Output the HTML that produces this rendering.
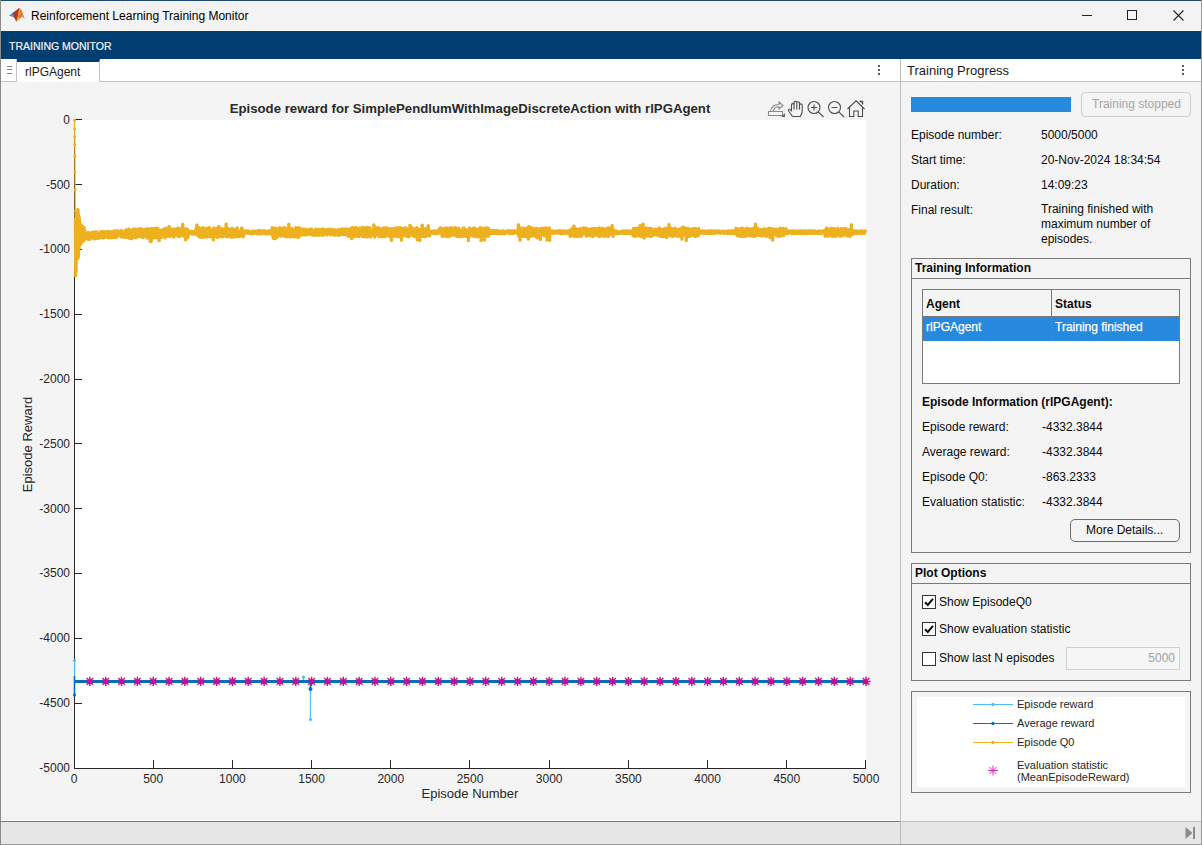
<!DOCTYPE html>
<html><head><meta charset="utf-8">
<style>
*{margin:0;padding:0;box-sizing:border-box}
html,body{width:1202px;height:845px;overflow:hidden;background:#f4f4f4;font-family:"Liberation Sans",sans-serif;color:#000}
.abs{position:absolute}
.t{position:absolute;white-space:nowrap;font-size:12px;line-height:15px;color:#0a0a0a}
.b{font-weight:bold}
#titlebar{left:0;top:0;width:1202px;height:31px;background:#f3f3f3;border-top:1px solid #1c4a73;border-bottom:1px solid #fff}
#toolstrip{left:1px;top:31px;width:1201px;height:28px;background:#003e71}
#tabstrip{left:1px;top:59px;width:899px;height:23px;background:#fff;border-bottom:1px solid #c4c4c4}
#doc{left:1px;top:82px;width:899px;height:739px;background:#f4f4f4}
#vsep{left:900px;top:59px;width:1px;height:762px;background:#bdbdbd}
#rpanel{left:901px;top:82px;width:300px;height:739px;background:#f4f4f4}
#rhead{left:901px;top:59px;width:300px;height:23px;background:#fff;border-bottom:1px solid #c4c4c4}
#status{left:1px;top:821px;width:1201px;height:24px;background:#e6e6e6;border-bottom:1px solid #9a9a9a}
#leftborder{left:0;top:0;width:1px;height:845px;background:#8a8a8a}
#rightborder{left:1201px;top:0;width:1px;height:845px;background:#9a9a9a}
.panel{position:absolute;border:1px solid #7a7a7a;background:#f4f4f4}
.phead{position:absolute;left:0;top:0;right:0;height:20px;border-bottom:1px solid #7a7a7a}
.cb{position:absolute;width:14px;height:14px;border:1px solid #333;background:#fff}
</style></head>
<body>
<div id="titlebar" class="abs"></div>
<svg class="abs" style="left:0;top:0" width="30" height="30" viewBox="0 0 30 30">
 <path d="M9.2,15.6 L14.6,11.6 L17.2,13.2 L14.2,17.6 Z" fill="#3f8fd6"/>
 <path d="M12.5,13.2 L14.6,11.6 L16,12.6 L13.6,14.8 Z" fill="#2a5d9a"/>
 <path d="M14.2,11.9 L19.3,7.8 L18.6,14 L16.4,21.8 L14,17.2 Z" fill="#b8361a"/>
 <path d="M19.3,7.8 L21.3,9.6 L24.8,19.2 L22.3,16.6 L16.4,21.8 L18.6,14 Z" fill="#e47b2a"/>
 <path d="M19.3,7.8 L20.6,9 L19.4,15.5 L18.6,14 Z" fill="#f09a3a"/>
 <path d="M16.4,21.8 L18.2,17.6 L20.2,18.8 Z" fill="#f4c03a"/>
</svg>
<div class="t" style="left:31px;top:9px;font-size:12px;color:#000">Reinforcement Learning Training Monitor</div>
<div class="abs" style="left:1082px;top:15px;width:10px;height:1px;background:#222"></div>
<div class="abs" style="left:1127px;top:10px;width:10px;height:10px;border:1px solid #222"></div>
<svg class="abs" style="left:1173px;top:10px" width="11" height="11" viewBox="0 0 11 11"><path d="M0.5,0.5 L10.5,10.5 M10.5,0.5 L0.5,10.5" stroke="#222" stroke-width="1.1"/></svg>
<div id="toolstrip" class="abs"></div>
<div class="t" style="left:9px;top:39px;font-size:10.5px;color:#f2f2f2;line-height:15px;-webkit-text-stroke:0.2px #f2f2f2">TRAINING MONITOR</div>
<div id="tabstrip" class="abs"></div>
<div class="abs" style="left:1px;top:59px;width:16px;height:23px;background:#fff;border-right:1px solid #c4c4c4;border-bottom:1px solid #c4c4c4"></div>
<div class="abs" style="left:7px;top:66px;width:5px;height:1px;background:#808080;box-shadow:0 3px 0 #808080,0 7px 0 #808080"></div>
<div class="abs" style="left:17px;top:59px;width:83px;height:23px;background:#fff;border-top:3px solid #003e71;border-right:1px solid #c4c4c4"></div>
<div class="t" style="left:25px;top:65px;font-size:12px;color:#1a1a1a">rlPGAgent</div>
<div class="abs" style="left:878px;top:65px;width:2px;height:2px;background:#5a5a5a;box-shadow:0 4px 0 #5a5a5a,0 8px 0 #5a5a5a"></div>
<div id="doc" class="abs"></div>
<div id="rpanel" class="abs"></div>
<div id="rhead" class="abs"></div>
<div class="t" style="left:907px;top:63px;font-size:13px;color:#1a1a1a">Training Progress</div>
<div class="abs" style="left:1182px;top:65px;width:2px;height:2px;background:#5a5a5a;box-shadow:0 4px 0 #5a5a5a,0 8px 0 #5a5a5a"></div>
<div id="vsep" class="abs"></div>
<svg class="abs" style="left:0;top:0" width="900" height="821" viewBox="0 0 900 821">
<rect x="74" y="120" width="792" height="648" fill="#fff"/>
<path d="M74.5,120 L74.5,768.5 L866,768.5" fill="none" stroke="#262626" stroke-width="1"/>
<path d="M74,119.5L82,119.5M74,184.5L82,184.5M74,249.5L82,249.5M74,314.5L82,314.5M74,379.5L82,379.5M74,443.5L82,443.5M74,508.5L82,508.5M74,573.5L82,573.5M74,638.5L82,638.5M74,703.5L82,703.5M74,768.5L82,768.5M74.5,760L74.5,768M153.5,760L153.5,768M232.5,760L232.5,768M311.5,760L311.5,768M390.5,760L390.5,768M469.5,760L469.5,768M549.5,760L549.5,768M628.5,760L628.5,768M707.5,760L707.5,768M786.5,760L786.5,768M865.5,760L865.5,768" stroke="#262626" stroke-width="1" fill="none"/>
<path d="M75.4,218.5 75.6,254.8 75.7,275.5 75.9,262.6 76.1,270.3 76.2,213.3 76.4,257.4 76.5,215.9 76.7,250.9 76.9,222.4 77,247 77.2,213.3 77.3,249.6 77.5,218.5 77.6,244.4 77.8,209.3 78,258.5 78.1,210.6 78.3,257.5 78.4,213.8 78.6,254.6 78.8,221.8 78.9,248.9 79.1,216.6 79.2,248.5 79.4,218.7 79.5,243.8 79.7,222.7 79.9,243.6 80,223.3 80.2,244.4 80.3,226.8 80.5,241.9 80.7,226.2 80.8,244.3 81,224.8 81.1,240.6 81.3,225.3 81.4,240.1 81.6,226.4 81.8,239.7 81.9,228.9 82.1,241.9 82.2,228.5 82.4,239.5 82.6,226.4 82.7,241.3 82.9,228.7 83,241.3 83.2,228.2 83.3,240.2 83.5,229.3 83.7,240.8 83.8,228.1 84,240.7 84.1,227.7 84.3,238.8 84.5,229.2 84.6,238.4 84.8,229.8 84.9,238 85.1,236.5 85.3,235.7 85.5,233 85.7,236.3 85.9,236 86.1,235.4 86.3,238.3 86.5,235.9 86.7,235.1 86.8,233.9 87,238.9 87.2,237.4 87.4,238.9 87.6,233.7 87.8,234.5 88,239.2 88.2,232.4 88.4,232.5 88.6,234.7 88.8,235 89,238.3 89.2,239.3 89.4,235.6 89.6,239 89.8,238 90,237.6 90.2,239.1 90.4,236 90.6,236.1 90.8,233.2 90.9,235.5 91.1,234.6 91.3,235.6 91.5,234.5 91.7,235.9 91.9,237.2 92.1,232 92.3,232 92.5,233.1 92.7,234 92.9,236.9 93.1,237.5 93.3,237 93.5,238.6 93.7,233.6 93.9,236.2 94.1,233 94.3,236.3 94.5,232.1 94.7,232.9 94.9,239 95,237.5 95.2,232.4 95.4,235.6 95.6,231.9 95.8,236.1 96,238.4 96.2,234.4 96.4,233.3 96.6,236.9 96.8,238.2 97,236.5 97.2,231.9 97.4,233.4 97.6,238 97.8,237 98,238.1 98.2,238.3 98.4,233 98.6,237.5 98.8,234.7 99,235.5 99.1,237.3 99.3,233.5 99.5,237.7 99.7,234.1 99.9,237.8 100.1,235.6 100.3,237.1 100.5,236.7 100.7,231.7 100.9,232.8 101.1,236.4 101.3,232.2 101.5,237.1 101.7,235.7 101.9,232.4 102.1,233.9 102.3,237.8 102.5,231.4 102.7,237 102.9,236.6 103.1,232.9 103.2,236.1 103.4,236.3 103.6,237.9 103.8,237.8 104,234.3 104.2,236.7 104.4,234.1 104.6,235.7 104.8,235.1 105,231.5 105.2,234.9 105.4,234.2 105.6,232.1 105.8,237 106,237.2 106.2,231.8 106.4,232.5 106.6,236.5 106.8,236.9 107,233 107.2,231.5 107.3,236.8 107.5,231.5 107.7,231.9 107.9,233.9 108.1,235.2 108.3,237.4 108.5,237.9 108.7,231.3 108.9,236.4 109.1,233.1 109.3,236.3 109.5,232.3 109.7,233.9 109.9,236 110.1,236.8 110.3,233 110.5,237.6 110.7,236.4 110.9,234.1 111.1,232 111.3,233.7 111.5,236 111.6,231.5 111.8,236.5 112,237.9 112.2,236.1 112.4,234.8 112.6,237.5 112.8,236.7 113,235.3 113.2,233.9 113.4,237 113.6,235.3 113.8,231.6 114,230.9 114.2,233.2 114.4,233 114.6,233.7 114.8,236.9 115,237.6 115.2,237.7 115.4,231.4 115.6,232.9 115.7,231 115.9,237.6 116.1,233.3 116.3,234.4 116.5,232.6 116.7,235.5 116.9,230.7 117.1,237.2 117.3,233.9 117.5,232.5 117.7,231.4 117.9,232.5 118.1,232.7 118.3,232.1 118.5,231.2 118.7,235.2 118.9,232.8 119.1,231.3 119.3,231.5 119.5,234.7 119.7,232.1 119.8,231.5 120,233.6 120.2,233.2 120.4,234.9 120.6,233.5 120.8,233.3 121,237 121.2,233.1 121.4,230.6 121.6,231.4 121.8,232.4 122,234.8 122.2,232.4 122.4,233.4 122.6,234.4 122.8,231.6 123,236.9 123.2,232.2 123.4,237.3 123.6,233.3 123.8,234.1 123.9,235.8 124.1,232.6 124.3,234 124.5,233.1 124.7,231 124.9,235.6 125.1,237.3 125.3,235.3 125.5,232.6 125.7,236 125.9,236.2 126.1,229.8 126.3,234.5 126.5,235.6 126.7,236.9 126.9,230.7 127.1,230 127.3,233 127.5,237.5 127.7,230.4 127.9,231.7 128,236.1 128.2,234.3 128.4,236.7 128.6,232.5 128.8,235.7 129,228.9 129.2,238.1 129.4,230 129.6,231.6 129.8,235.7 130,238.6 130.2,234.2 130.4,230.4 130.6,237.4 130.8,232.4 131,232.4 131.2,230.6 131.4,231.8 131.6,233.9 131.8,238.6 132,231.5 132.1,236 132.3,231.7 132.5,232.5 132.7,234.7 132.9,229.6 133.1,229.3 133.3,237.4 133.5,232.4 133.7,234.9 133.9,229.8 134.1,229.1 134.3,232.1 134.5,231.4 134.7,232.2 134.9,236.5 135.1,228.8 135.3,233.2 135.5,235.4 135.7,230 135.9,237.8 136.1,233.1 136.3,233.7 136.4,230.4 136.6,230.5 136.8,235.2 137,237.2 137.2,233.4 137.4,230.1 137.6,229 137.8,229 138,236.3 138.2,235.6 138.4,232.1 138.6,230 138.8,235.4 139,230 139.2,236.4 139.4,228.8 139.6,232.7 139.8,233.1 140,232.4 140.2,228.7 140.4,234.4 140.5,232.8 140.7,231.5 140.9,233 141.1,228.9 141.3,235.7 141.5,237.2 141.7,230.3 141.9,233.6 142.1,236.5 142.3,229.1 142.5,230.6 142.7,236.5 142.9,231.5 143.1,234.8 143.3,237.3 143.5,237.1 143.7,235.9 143.9,233.1 144.1,234.6 144.3,233.1 144.5,236.3 144.6,232 144.8,229.8 145,229.8 145.2,230.9 145.4,229.3 145.6,235.2 145.8,236.1 146,229.4 146.2,235.9 146.4,235.7 146.6,230 146.8,230.4 147,234.3 147.2,238.1 147.4,231.5 147.6,228.6 147.8,233.2 148,233.2 148.2,236.4 148.4,237.2 148.6,232.7 148.7,232.6 148.9,236.4 149.1,229.9 149.3,229 149.5,237.6 149.7,233.6 149.9,234.9 150.1,233.1 150.3,241.6 150.5,236.4 150.7,230.8 150.9,236.2 151.1,241.4 151.3,231.2 151.5,231.9 151.7,232.2 151.9,228.4 152.1,235.6 152.3,230.8 152.5,230.1 152.7,229.2 152.8,231.2 153,230.5 153.2,231 153.4,234.7 153.6,238 153.8,231.8 154,235.8 154.2,231.5 154.4,231.6 154.6,232.8 154.8,228.2 155,231.1 155.2,228.4 155.4,232 155.6,235.5 155.8,237.6 156,234.3 156.2,235.6 156.4,232.6 156.6,228.5 156.8,228.2 156.9,230 157.1,232.1 157.3,237.6 157.5,236.4 157.7,236.3 157.9,232 158.1,228.7 158.3,232.8 158.5,234.4 158.7,231.5 158.9,235.2 159.1,240.6 159.3,231.7 159.5,231.2 159.7,234.9 159.9,232.2 160.1,234.8 160.3,235.8 160.5,235.5 160.7,237.5 160.9,230 161.1,236.5 161.2,235.5 161.4,237.4 161.6,236.8 161.8,234.4 162,234.3 162.2,233.8 162.4,231.6 162.6,234.3 162.8,229.9 163,235.1 163.2,233.2 163.4,234.9 163.6,229.6 163.8,231.9 164,231 164.2,235.1 164.4,228.5 164.6,231.5 164.8,231.2 165,237.8 165.2,237.6 165.3,235.7 165.5,230.4 165.7,236.3 165.9,228.2 166.1,234.4 166.3,233 166.5,229.3 166.7,233.4 166.9,229.6 167.1,233.5 167.3,234 167.5,236.3 167.7,232 167.9,230.4 168.1,236 168.3,232.1 168.5,234.6 168.7,233.6 168.9,229.8 169.1,226.6 169.3,231.3 169.4,234.8 169.6,231 169.8,236.4 170,230.7 170.2,236.6 170.4,232.2 170.6,228.6 170.8,233.5 171,234.8 171.2,233.8 171.4,229 171.6,234.2 171.8,234.2 172,234 172.2,232.2 172.4,232.5 172.6,232.2 172.8,230.3 173,235 173.2,232.7 173.4,232.2 173.5,231.4 173.7,237.1 173.9,230 174.1,236.9 174.3,228.9 174.5,231.5 174.7,230.4 174.9,235.3 175.1,230.2 175.3,230.2 175.5,234.4 175.7,231.1 175.9,232.4 176.1,230.8 176.3,233.7 176.5,231.2 176.7,229.8 176.9,229 177.1,231.4 177.3,230.7 177.5,233.6 177.6,236.2 177.8,228 178,236 178.2,233.5 178.4,228.2 178.6,234.6 178.8,231.3 179,235.9 179.2,233.2 179.4,228.8 179.6,236.6 179.8,235.5 180,230.6 180.2,235.5 180.4,234.9 180.6,230.2 180.8,232.3 181,233 181.2,229 181.4,234.3 181.6,228.3 181.8,235.5 181.9,228.4 182.1,233.9 182.3,232.6 182.5,227.9 182.7,224.3 182.9,233.2 183.1,233.5 183.3,233.5 183.5,236.2 183.7,229.7 183.9,230.4 184.1,232.6 184.3,232 184.5,235.6 184.7,236.1 184.9,234.2 185.1,232.4 185.3,230.8 185.5,230.3 185.7,239.7 185.9,228.6 186,229.5 186.2,232.3 186.4,236 186.6,234.5 186.8,236.8 187,233 187.2,234.1 187.4,236.5 187.6,233.1 187.8,229.5 188,237.4 188.2,232 188.4,233.6 188.6,232.5 188.8,232.8 189,234.3 189.2,231 189.4,231.7 189.6,233.7 189.8,232.3 190,233.4 190.1,233.1 190.3,232.5 190.5,233.3 190.7,233.2 190.9,233 191.1,232.1 191.3,233.5 191.5,233.7 191.7,231.9 191.9,233.2 192.1,231.1 192.3,232.4 192.5,231.9 192.7,233.2 192.9,231.5 193.1,234 193.3,233.8 193.5,234 193.7,232 193.9,231.9 194.1,233.7 194.2,233 194.4,231.5 194.6,232.3 194.8,234 195,233.5 195.2,233.8 195.4,233.9 195.6,232.9 195.8,234.1 196,228.5 196.2,232.5 196.4,230 196.6,233.7 196.8,225 197,234.4 197.2,235.1 197.4,232.3 197.6,235.6 197.8,233.2 198,235.5 198.2,234.6 198.3,230.5 198.5,232.2 198.7,235.2 198.9,232.5 199.1,235.5 199.3,227.7 199.5,228.3 199.7,237.2 199.9,229.9 200.1,232.8 200.3,234.2 200.5,228.9 200.7,228.8 200.9,230.3 201.1,231.9 201.3,236.8 201.5,235.8 201.7,228.7 201.9,236 202.1,237.4 202.3,233.9 202.4,233.9 202.6,231.6 202.8,233 203,229.8 203.2,227.7 203.4,230.1 203.6,228.6 203.8,231.2 204,235.9 204.2,237.1 204.4,236.3 204.6,234.1 204.8,235 205,236.9 205.2,230.4 205.4,233.5 205.6,236.4 205.8,228.7 206,231.9 206.2,234.7 206.4,232.9 206.6,230.7 206.7,236.3 206.9,228.2 207.1,232.3 207.3,237.2 207.5,234.5 207.7,233.2 207.9,234.3 208.1,228.8 208.3,235 208.5,235 208.7,227.9 208.9,236.4 209.1,232.1 209.3,228.2 209.5,227.6 209.7,228.9 209.9,232.1 210.1,235.8 210.3,233.3 210.5,236.7 210.7,236.1 210.8,231.8 211,234.5 211.2,237.2 211.4,233.1 211.6,232.2 211.8,230.6 212,234.4 212.2,234.3 212.4,236 212.6,229.8 212.8,235.4 213,230.6 213.2,234.3 213.4,239.8 213.6,235.1 213.8,227.8 214,234.4 214.2,228 214.4,233.3 214.6,234.1 214.8,229.8 214.9,235.7 215.1,236.2 215.3,234.7 215.5,232.5 215.7,234.7 215.9,232.2 216.1,232.3 216.3,228.6 216.5,235.2 216.7,230.8 216.9,236.6 217.1,236.6 217.3,237.3 217.5,232.1 217.7,231.8 217.9,227.7 218.1,235.6 218.3,237.1 218.5,235.9 218.7,231.3 218.9,226.6 219,236.7 219.2,228.5 219.4,232.6 219.6,234.5 219.8,231.1 220,230.1 220.2,231.5 220.4,236.2 220.6,230.8 220.8,234.8 221,230.3 221.2,232 221.4,231.4 221.6,235.4 221.8,236.8 222,228.7 222.2,231.4 222.4,229.5 222.6,230.3 222.8,237 223,235.6 223.1,231.7 223.3,231.2 223.5,233.2 223.7,229.3 223.9,229.7 224.1,232.5 224.3,232.3 224.5,234.9 224.7,230.9 224.9,232.9 225.1,232.8 225.3,230.4 225.5,236.1 225.7,231.5 225.9,230 226.1,224 226.3,235.9 226.5,234.4 226.7,236.6 226.9,227.6 227.1,230.1 227.2,234.8 227.4,235 227.6,228.2 227.8,234 228,231.3 228.2,233.4 228.4,236.7 228.6,230.5 228.8,231.5 229,232.8 229.2,229.1 229.4,229.7 229.6,233.9 229.8,231.9 230,235.3 230.2,232.7 230.4,232.9 230.6,230.7 230.8,235.3 231,236.6 231.2,233.8 231.4,237.1 231.5,234.7 231.7,228.3 231.9,234.7 232.1,235.8 232.3,233.8 232.5,230.2 232.7,237.1 232.9,233.5 233.1,228.7 233.3,229.8 233.5,236.8 233.7,235 233.9,235.8 234.1,237 234.3,233.1 234.5,236 234.7,234.7 234.9,230.8 235.1,235.3 235.3,230.3 235.5,233.5 235.6,235.1 235.8,233.9 236,236.9 236.2,231.1 236.4,229.4 236.6,234.4 236.8,228.3 237,230.5 237.2,227.9 237.4,235 237.6,236.4 237.8,233.4 238,233.5 238.2,232.4 238.4,235.7 238.6,232.6 238.8,230.8 239,236.4 239.2,233.1 239.4,231.6 239.6,231.9 239.7,237 239.9,233.7 240.1,233.3 240.3,232.4 240.5,232.7 240.7,234.8 240.9,233.9 241.1,231.7 241.3,230.7 241.5,232.7 241.7,227.9 241.9,231.6 242.1,229.7 242.3,231.2 242.5,233.2 242.7,229.2 242.9,233.5 243.1,236.9 243.3,232.3 243.5,233.7 243.7,235.8 243.8,235 244,233.3 244.2,234.1 244.4,232.2 244.6,232.7 244.8,233.2 245,232.4 245.2,231.9 245.4,232.2 245.6,231.9 245.8,232.2 246,231.2 246.2,230.8 246.4,232.9 246.6,232.9 246.8,231.1 247,233 247.2,231.6 247.4,231.7 247.6,231.7 247.8,230.8 247.9,231.3 248.1,233.5 248.3,231.9 248.5,232.4 248.7,232.1 248.9,232.8 249.1,233.1 249.3,231.5 249.5,232.2 249.7,233.2 249.9,233.2 250.1,232.9 250.3,233.4 250.5,232.3 250.7,233.6 250.9,233.8 251.1,233.8 251.3,233.7 251.5,231.7 251.7,233.7 251.9,232.5 252,231.4 252.2,232.4 252.4,233.5 252.6,231.1 252.8,231.1 253,233.9 253.2,233.2 253.4,232.3 253.6,231.3 253.8,232.7 254,231.6 254.2,233.2 254.4,231.6 254.6,232.9 254.8,232.9 255,231.5 255.2,231.2 255.4,231.2 255.6,232.1 255.8,232.6 256,231.6 256.2,231.9 256.3,231.2 256.5,231.3 256.7,233.6 256.9,232.8 257.1,231.8 257.3,233.2 257.5,233.4 257.7,234 257.9,232 258.1,230.8 258.3,230.7 258.5,233.6 258.7,231.7 258.9,232.6 259.1,231.9 259.3,232.7 259.5,230.9 259.7,230.7 259.9,233.9 260.1,231.6 260.3,233.6 260.4,233.9 260.6,233.1 260.8,231.6 261,230.7 261.2,233.6 261.4,232.9 261.6,233.9 261.8,232.2 262,232.4 262.2,232.8 262.4,233 262.6,231.3 262.8,231.2 263,233.1 263.2,232.7 263.4,231.9 263.6,231.4 263.8,230.7 264,232.7 264.2,231.7 264.4,232.2 264.5,231.3 264.7,233.5 264.9,233.4 265.1,233.6 265.3,230.9 265.5,233.2 265.7,232.4 265.9,233.6 266.1,232.9 266.3,233.9 266.5,232.1 266.7,233.5 266.9,231.9 267.1,233.1 267.3,233.2 267.5,232.4 267.7,232.8 267.9,233.1 268.1,233.8 268.3,233.8 268.5,231 268.6,233 268.8,233.7 269,233.4 269.2,232.4 269.4,230.6 269.6,233.3 269.8,231.1 270,232.4 270.2,232.6 270.4,231.3 270.6,232.7 270.8,233.8 271,232.1 271.2,231.8 271.4,231.9 271.6,233.1 271.8,230.8 272,231.1 272.2,227.5 272.4,229 272.6,235.5 272.7,235.5 272.9,236.5 273.1,229.8 273.3,238.2 273.5,233.6 273.7,234.6 273.9,228.2 274.1,234.2 274.3,230.7 274.5,229.7 274.7,232.5 274.9,233.2 275.1,238.7 275.3,233.4 275.5,230.8 275.7,233.6 275.9,233.7 276.1,228.3 276.3,236.3 276.5,229.9 276.7,229.9 276.8,230.5 277,236.2 277.2,233.8 277.4,237.1 277.6,233.2 277.8,231.9 278,235.2 278.2,234.1 278.4,236.1 278.6,233 278.8,235 279,230.3 279.2,234.5 279.4,227.9 279.6,235.4 279.8,227.5 280,231 280.2,230.9 280.4,231.2 280.6,228.8 280.8,232.2 281,236.1 281.1,230.4 281.3,230.7 281.5,233.4 281.7,231.3 281.9,232.1 282.1,231.1 282.3,231.4 282.5,228.1 282.7,232.6 282.9,230 283.1,230 283.3,233.3 283.5,235.9 283.7,232.4 283.9,229 284.1,228 284.3,229.4 284.5,227.5 284.7,228.7 284.9,234.7 285.1,232.7 285.2,228.7 285.4,234.4 285.6,236.5 285.8,229.5 286,234.8 286.2,228.8 286.4,231.8 286.6,229.4 286.8,233.6 287,236.8 287.2,228.7 287.4,236 287.6,233.4 287.8,231.1 288,236.5 288.2,235.2 288.4,228.6 288.6,235.2 288.8,224.4 289,228.9 289.2,230.7 289.3,235.1 289.5,235.5 289.7,236.8 289.9,234.6 290.1,231.1 290.3,237.1 290.5,235.2 290.7,228.7 290.9,235.2 291.1,234.6 291.3,231.2 291.5,235.9 291.7,236.2 291.9,233.1 292.1,236 292.3,228.6 292.5,236.4 292.7,235 292.9,235.2 293.1,235 293.3,233.6 293.4,231.5 293.6,234.6 293.8,237 294,237 294.2,231.4 294.4,233.4 294.6,236.2 294.8,229.7 295,230.7 295.2,235.1 295.4,237 295.6,231.4 295.8,227.5 296,228.6 296.2,235.6 296.4,235.5 296.6,232.5 296.8,236.6 297,237 297.2,232.9 297.4,231.9 297.5,236.6 297.7,230.8 297.9,228.1 298.1,231.5 298.3,229 298.5,236.2 298.7,237.1 298.9,230.4 299.1,228.3 299.3,227.7 299.5,228.5 299.7,235.6 299.9,233.6 300.1,229.7 300.3,234.9 300.5,232.9 300.7,231.9 300.9,229.1 301.1,230.4 301.3,235 301.5,228.9 301.6,231.8 301.8,235.2 302,234 302.2,231.2 302.4,232.2 302.6,233.6 302.8,233.3 303,234 303.2,231.7 303.4,232.5 303.6,229 303.8,231.7 304,234.5 304.2,234.9 304.4,234.7 304.6,229.6 304.8,230.2 305,232.2 305.2,234.7 305.4,231.8 305.6,234.5 305.8,231.5 305.9,229.1 306.1,230.8 306.3,234.8 306.5,230.1 306.7,234.1 306.9,230.3 307.1,234.9 307.3,230.7 307.5,233.1 307.7,233.7 307.9,231.5 308.1,232.9 308.3,232.3 308.5,229.5 308.7,232 308.9,230.5 309.1,230.4 309.3,233 309.5,233.6 309.7,234.2 309.9,232 310,231.2 310.2,232.8 310.4,229.6 310.6,234.3 310.8,228.9 311,231.9 311.2,234.7 311.4,229 311.6,229.4 311.8,235 312,231.4 312.2,233.8 312.4,231.6 312.6,234.2 312.8,235.1 313,230.3 313.2,233 313.4,231.3 313.6,233.4 313.8,234.8 314,233.5 314.1,232.1 314.3,234.5 314.5,233.1 314.7,233.5 314.9,230.1 315.1,231.1 315.3,230.8 315.5,235.4 315.7,233.2 315.9,229.2 316.1,232.1 316.3,232.1 316.5,230.7 316.7,233.1 316.9,231.6 317.1,234.9 317.3,231 317.5,233.2 317.7,234 317.9,229.1 318.1,231 318.2,230 318.4,234.2 318.6,230.5 318.8,235.3 319,234.4 319.2,234.8 319.4,230.5 319.6,233.3 319.8,229.9 320,234.2 320.2,231.7 320.4,230.2 320.6,229.3 320.8,231.3 321,233.1 321.2,235 321.4,231.8 321.6,235 321.8,233 322,234.1 322.2,233.9 322.3,235.4 322.5,234.6 322.7,234.6 322.9,233.7 323.1,233.7 323.3,228.9 323.5,232.3 323.7,233 323.9,235.1 324.1,234.7 324.3,233.3 324.5,230.8 324.7,231.5 324.9,231 325.1,234.2 325.3,231.9 325.5,230.1 325.7,232.4 325.9,233.4 326.1,231.4 326.3,229.5 326.5,230.1 326.6,234.5 326.8,235.1 327,231 327.2,234.7 327.4,230.5 327.6,231.1 327.8,230.2 328,232.6 328.2,229.6 328.4,230.7 328.6,230 328.8,229.2 329,233.2 329.2,230 329.4,230.8 329.6,230.9 329.8,232.9 330,231 330.2,231.2 330.4,234.9 330.6,229.8 330.7,235 330.9,233.4 331.1,234.7 331.3,229.2 331.5,234.6 331.7,233.8 331.9,232.9 332.1,229.6 332.3,229.4 332.5,234.3 332.7,230.9 332.9,232.3 333.1,232.7 333.3,230.2 333.5,232.2 333.7,232.4 333.9,231.9 334.1,229.9 334.3,230.4 334.5,233.4 334.7,235.5 334.8,230.1 335,231.2 335.2,233.1 335.4,230.2 335.6,231 335.8,232.6 336,231.7 336.2,232.5 336.4,230.4 336.6,234.6 336.8,230.9 337,233 337.2,235 337.4,232.3 337.6,231.4 337.8,233.3 338,232.9 338.2,235.3 338.4,229.4 338.6,230.2 338.8,233.9 338.9,234 339.1,234.2 339.3,229.5 339.5,235.2 339.7,234.4 339.9,232.8 340.1,232 340.3,233 340.5,234.8 340.7,234.4 340.9,231.4 341.1,231 341.3,232.2 341.5,234.6 341.7,228.9 341.9,233.2 342.1,234.5 342.3,232.3 342.5,232.3 342.7,232.6 342.9,229.1 343,233.2 343.2,233.6 343.4,234 343.6,234.6 343.8,229 344,229.8 344.2,230.6 344.4,233.3 344.6,234.5 344.8,234.3 345,234.5 345.2,228.9 345.4,233.1 345.6,233.4 345.8,234.9 346,230.3 346.2,230.2 346.4,231.5 346.6,230 346.8,229 347,234.9 347.1,233.2 347.3,234.5 347.5,229.6 347.7,231.1 347.9,233.7 348.1,231.7 348.3,236.4 348.5,229.4 348.7,235.6 348.9,229.1 349.1,235.9 349.3,229.3 349.5,229.8 349.7,231.4 349.9,234.1 350.1,229.5 350.3,231.8 350.5,230.4 350.7,235 350.9,234.5 351.1,228.5 351.3,231.8 351.4,228.1 351.6,238.5 351.8,233.5 352,235.8 352.2,230.6 352.4,233.1 352.6,228.3 352.8,227.6 353,231.8 353.2,230.5 353.4,230.3 353.6,228.1 353.8,236.1 354,235.2 354.2,236.8 354.4,228.4 354.6,228.3 354.8,235 355,235.7 355.2,228.6 355.4,233 355.5,231.2 355.7,227.4 355.9,228.4 356.1,235.5 356.3,235.6 356.5,236.1 356.7,234.2 356.9,233.1 357.1,235.3 357.3,228.9 357.5,230.6 357.7,233.5 357.9,235 358.1,234.9 358.3,235 358.5,228.4 358.7,236.7 358.9,230.1 359.1,233.7 359.3,228 359.5,235.2 359.6,232.7 359.8,228.2 360,230.5 360.2,231.3 360.4,231.5 360.6,234.1 360.8,232.2 361,235.1 361.2,234.7 361.4,230.4 361.6,232.8 361.8,231.7 362,230.6 362.2,236.4 362.4,227.4 362.6,230.6 362.8,227.4 363,228.3 363.2,227.9 363.4,227.6 363.6,236.6 363.7,227.8 363.9,235.6 364.1,235.6 364.3,234.9 364.5,235.8 364.7,229.3 364.9,236.7 365.1,230.3 365.3,228.8 365.5,230.6 365.7,230 365.9,235.7 366.1,227.5 366.3,230.5 366.5,234 366.7,234.4 366.9,229.2 367.1,229.3 367.3,236.2 367.5,237 367.7,227.6 367.8,230.5 368,227.7 368.2,236.1 368.4,228.4 368.6,233.7 368.8,232.4 369,235.7 369.2,230.5 369.4,231.4 369.6,234.4 369.8,233.2 370,227.8 370.2,233 370.4,231.2 370.6,236.9 370.8,235.5 371,233.8 371.2,231.6 371.4,234.7 371.6,235.5 371.8,231.5 371.9,232.9 372.1,234.6 372.3,232.3 372.5,231.1 372.7,230.7 372.9,231.6 373.1,229.7 373.3,234.1 373.5,233.2 373.7,233.8 373.9,224.9 374.1,232.3 374.3,232.1 374.5,237.1 374.7,234.5 374.9,231 375.1,236.2 375.3,232.4 375.5,227.7 375.7,232.8 375.9,229.3 376.1,229 376.2,234.6 376.4,232.2 376.6,231.7 376.8,232.3 377,234.3 377.2,232.2 377.4,235.2 377.6,229 377.8,227.6 378,230.4 378.2,230.2 378.4,229.3 378.6,229.2 378.8,234.7 379,236.9 379.2,233.8 379.4,231.2 379.6,228.1 379.8,236.5 380,236 380.2,228.6 380.3,235.3 380.5,229.7 380.7,231.1 380.9,230 381.1,228.7 381.3,229.5 381.5,231.6 381.7,230.9 381.9,233.4 382.1,236.9 382.3,229.4 382.5,230.8 382.7,230.4 382.9,234 383.1,235.3 383.3,230.4 383.5,233.9 383.7,228.3 383.9,227.9 384.1,227.8 384.3,233.9 384.4,232 384.6,236.7 384.8,231.9 385,229.9 385.2,235.1 385.4,234.7 385.6,236.4 385.8,233.6 386,227.9 386.2,233.1 386.4,234.8 386.6,227.8 386.8,232.9 387,229.7 387.2,230.9 387.4,228.4 387.6,231.8 387.8,232 388,229.7 388.2,235.6 388.4,234.4 388.5,230.1 388.7,229.7 388.9,230.3 389.1,232.9 389.3,232.5 389.5,228.5 389.7,236.4 389.9,230.4 390.1,235.8 390.3,231.5 390.5,233.2 390.7,230.5 390.9,236.6 391.1,235.8 391.3,240.2 391.5,230 391.7,235.1 391.9,229.9 392.1,228.6 392.3,230.9 392.5,236.8 392.6,230.1 392.8,229.9 393,235.2 393.2,236.2 393.4,235.1 393.6,235.1 393.8,235 394,228.7 394.2,236.2 394.4,231 394.6,230.7 394.8,232.2 395,228.1 395.2,236.3 395.4,234.9 395.6,231.3 395.8,232.7 396,234.2 396.2,236.2 396.4,230.1 396.6,233.3 396.7,233.7 396.9,236.2 397.1,228.7 397.3,227.9 397.5,232.9 397.7,236.6 397.9,230.8 398.1,227.6 398.3,233.8 398.5,232.4 398.7,230.5 398.9,235.5 399.1,229.8 399.3,229.3 399.5,236.8 399.7,233.7 399.9,233.9 400.1,229.4 400.3,232.4 400.5,227.7 400.7,236.1 400.9,232.6 401,232.8 401.2,234.3 401.4,240 401.6,229.1 401.8,234.4 402,231.9 402.2,233.4 402.4,235.6 402.6,228.7 402.8,234.6 403,235.9 403.2,229.4 403.4,234.5 403.6,230.4 403.8,229.2 404,235 404.2,230.3 404.4,228.6 404.6,232.5 404.8,232.8 405,231.6 405.1,227.6 405.3,234.9 405.5,235.6 405.7,233.8 405.9,232.9 406.1,228.3 406.3,235.4 406.5,230.3 406.7,228.6 406.9,234.9 407.1,234.8 407.3,236.6 407.5,236.4 407.7,231.8 407.9,236.1 408.1,233.6 408.3,231.3 408.5,236.4 408.7,236.8 408.9,235.3 409.1,230.6 409.2,233.9 409.4,234.3 409.6,233.6 409.8,234.6 410,225.4 410.2,235.4 410.4,235.5 410.6,230.5 410.8,231.8 411,228.7 411.2,232.8 411.4,234.7 411.6,233.6 411.8,232.8 412,227.5 412.2,228.9 412.4,234.2 412.6,230.8 412.8,232.7 413,233.5 413.2,231.7 413.3,233.5 413.5,236.2 413.7,234.9 413.9,230.8 414.1,235.2 414.3,231.9 414.5,232.9 414.7,236.6 414.9,233.6 415.1,231.9 415.3,228.7 415.5,230.2 415.7,232.7 415.9,228.5 416.1,231.8 416.3,230.2 416.5,229.9 416.7,232.2 416.9,230.8 417.1,227.6 417.3,239.7 417.4,234.7 417.6,235.3 417.8,232 418,235.3 418.2,229.4 418.4,235.4 418.6,230.1 418.8,229.5 419,229.9 419.2,230.9 419.4,229.3 419.6,229.9 419.8,240.5 420,234.1 420.2,230.7 420.4,230.8 420.6,230.8 420.8,231.4 421,235.1 421.2,234.6 421.4,233.4 421.5,230.7 421.7,231 421.9,230.4 422.1,225.2 422.3,233.3 422.5,236.5 422.7,227.6 422.9,233.9 423.1,231.4 423.3,235.3 423.5,232.2 423.7,231.6 423.9,235.2 424.1,236.3 424.3,236.7 424.5,232.5 424.7,231.1 424.9,229.8 425.1,236.5 425.3,235.6 425.5,236.6 425.7,228.7 425.8,236.2 426,228.9 426.2,228.3 426.4,235.9 426.6,235.2 426.8,235.1 427,235.4 427.2,231.9 427.4,235.6 427.6,232.2 427.8,232.5 428,231.1 428.2,225.8 428.4,234.3 428.6,235.5 428.8,228.6 429,236 429.2,234.5 429.4,234.7 429.6,236 429.8,230.9 429.9,231 430.1,232.8 430.3,233 430.5,232 430.7,233.5 430.9,232.5 431.1,231.6 431.3,231.9 431.5,231.7 431.7,232 431.9,231 432.1,231 432.3,233 432.5,233.1 432.7,232.3 432.9,233 433.1,232 433.3,233 433.5,232.2 433.7,233.6 433.9,231.3 434,231.7 434.2,232.5 434.4,232 434.6,233.2 434.8,230.7 435,232.6 435.2,233 435.4,231.7 435.6,231.1 435.8,233.8 436,233.3 436.2,232.2 436.4,231.9 436.6,232.1 436.8,233 437,232.6 437.2,231.9 437.4,231.5 437.6,233.5 437.8,231.6 438,231.8 438.1,230.9 438.3,232.2 438.5,232.9 438.7,229.4 438.9,232.6 439.1,230.6 439.3,231.7 439.5,230.1 439.7,231.9 439.9,228.3 440.1,227.9 440.3,231.3 440.5,233 440.7,231.8 440.9,230.6 441.1,230.9 441.3,228.1 441.5,230.6 441.7,234.5 441.9,229.1 442.1,236.4 442.2,232.5 442.4,231.4 442.6,235.4 442.8,236.1 443,228.8 443.2,233.4 443.4,233.4 443.6,230.9 443.8,236.4 444,233.9 444.2,234.3 444.4,235 444.6,228.9 444.8,228.4 445,234.4 445.2,233.6 445.4,236 445.6,230.1 445.8,231.2 446,234.3 446.2,230.5 446.4,230.5 446.5,236.2 446.7,230.3 446.9,227.9 447.1,232.8 447.3,236 447.5,235.6 447.7,234 447.9,228.4 448.1,236.9 448.3,235.6 448.5,235.9 448.7,230 448.9,235.5 449.1,235.2 449.3,234.3 449.5,230.3 449.7,236.2 449.9,227.8 450.1,233.2 450.3,229.8 450.5,228.4 450.6,232.3 450.8,233 451,227.9 451.2,235.5 451.4,235.2 451.6,233 451.8,227.8 452,234.7 452.2,232.1 452.4,234.3 452.6,232.1 452.8,231.3 453,234.7 453.2,228.8 453.4,234.8 453.6,232.1 453.8,234.6 454,229 454.2,235.1 454.4,234.8 454.6,234.6 454.7,232.2 454.9,227.7 455.1,229.5 455.3,232.9 455.5,227.7 455.7,229.6 455.9,234.6 456.1,231.7 456.3,230.5 456.5,234.2 456.7,236.5 456.9,231.6 457.1,235.3 457.3,231.4 457.5,230.4 457.7,231.9 457.9,231.9 458.1,232.3 458.3,236.3 458.5,228.1 458.7,228.2 458.8,234.1 459,235 459.2,229.6 459.4,236.8 459.6,236.1 459.8,231.7 460,232.5 460.2,233.9 460.4,232.8 460.6,235.7 460.8,229.8 461,235.8 461.2,231 461.4,230.8 461.6,235.2 461.8,234.1 462,234.1 462.2,236.2 462.4,236.6 462.6,234 462.8,232.1 462.9,229.4 463.1,228.5 463.3,229.2 463.5,232.8 463.7,229.9 463.9,227.9 464.1,235.8 464.3,235.3 464.5,231 464.7,235.9 464.9,233 465.1,233.4 465.3,234.9 465.5,230.9 465.7,229.8 465.9,233.8 466.1,232.9 466.3,236.4 466.5,231.8 466.7,231.6 466.9,232.3 467,234.9 467.2,231.1 467.4,230.7 467.6,230.3 467.8,232.3 468,230.9 468.2,232.9 468.4,240.5 468.6,236.1 468.8,229 469,233.7 469.2,236.6 469.4,229.5 469.6,228 469.8,227.8 470,235.5 470.2,231.7 470.4,231.8 470.6,230.7 470.8,233.6 471,234.8 471.2,229.6 471.3,230.5 471.5,233.8 471.7,233.7 471.9,229.8 472.1,229.3 472.3,235 472.5,232.5 472.7,229.1 472.9,232.3 473.1,236 473.3,228.2 473.5,234.1 473.7,231.9 473.9,229 474.1,228.2 474.3,232.6 474.5,236.2 474.7,233.9 474.9,233 475.1,236.6 475.3,228.4 475.4,233.2 475.6,228.9 475.8,233.1 476,231.3 476.2,232.2 476.4,234 476.6,234.2 476.8,231.9 477,232.6 477.2,231.5 477.4,236 477.6,236.8 477.8,235.4 478,229.4 478.2,230.1 478.4,236.8 478.6,235.4 478.8,233.1 479,230.8 479.2,233.3 479.4,233.3 479.5,230.4 479.7,235.6 479.9,228 480.1,229.1 480.3,227.7 480.5,229.1 480.7,231.9 480.9,228.6 481.1,240.4 481.3,234.4 481.5,229.8 481.7,231 481.9,232.9 482.1,228.6 482.3,230.4 482.5,228 482.7,232.6 482.9,231.4 483.1,236.2 483.3,234.6 483.5,231.5 483.6,232.6 483.8,235.7 484,232.2 484.2,233.3 484.4,232 484.6,239.9 484.8,235 485,232.4 485.2,230.8 485.4,230.8 485.6,228.2 485.8,228 486,230.8 486.2,235.8 486.4,228.8 486.6,232.7 486.8,228.5 487,235.7 487.2,228.4 487.4,228 487.6,230.4 487.7,235.6 487.9,228.1 488.1,230 488.3,236.5 488.5,233.1 488.7,233.8 488.9,228.7 489.1,231.5 489.3,233.6 489.5,232.6 489.7,232.2 489.9,231.4 490.1,233.7 490.3,232 490.5,231.6 490.7,231.1 490.9,233.2 491.1,232.8 491.3,232.4 491.5,233.6 491.7,230.7 491.8,231.4 492,232.6 492.2,231.5 492.4,232.5 492.6,230.8 492.8,233.3 493,232.4 493.2,231.2 493.4,231.5 493.6,233.3 493.8,230.7 494,230.9 494.2,231.2 494.4,233.4 494.6,230.7 494.8,231.2 495,231.9 495.2,233.4 495.4,231.3 495.6,231.7 495.8,231.6 496,233.3 496.1,232.8 496.3,233.3 496.5,233.6 496.7,231.8 496.9,232.7 497.1,230.7 497.3,231.1 497.5,232.1 497.7,233.7 497.9,232.3 498.1,232.3 498.3,233.6 498.5,230.9 498.7,231.2 498.9,232.4 499.1,231.4 499.3,231.9 499.5,231.9 499.7,233.3 499.9,231.2 500.1,232.7 500.2,233.6 500.4,231.8 500.6,232.8 500.8,232.3 501,232.3 501.2,233.2 501.4,233.7 501.6,231.9 501.8,233.2 502,231 502.2,231.8 502.4,231.6 502.6,232.1 502.8,230.9 503,233.6 503.2,232 503.4,232.8 503.6,233.6 503.8,231 504,232 504.2,231.5 504.3,231.5 504.5,233.5 504.7,232.2 504.9,232.7 505.1,233.7 505.3,231.8 505.5,231.7 505.7,232 505.9,232.9 506.1,232.8 506.3,232.2 506.5,232.5 506.7,231.6 506.9,232.7 507.1,231.1 507.3,231.9 507.5,231.6 507.7,232.7 507.9,232.5 508.1,231 508.3,230.8 508.4,231.4 508.6,231.3 508.8,230.7 509,233.4 509.2,232.8 509.4,232.6 509.6,232.7 509.8,233 510,233.5 510.2,231.2 510.4,232.1 510.6,231.9 510.8,231.2 511,233.5 511.2,232.4 511.4,232.3 511.6,232.6 511.8,232.8 512,230.8 512.2,233.6 512.4,232.4 512.5,231.2 512.7,231.5 512.9,233.7 513.1,233.5 513.3,233.3 513.5,232.4 513.7,232.5 513.9,231.1 514.1,230.7 514.3,232 514.5,233.2 514.7,231.5 514.9,231.6 515.1,231 515.3,232.7 515.5,231.9 515.7,231.3 515.9,232.3 516.1,232.2 516.3,231.6 516.5,233.1 516.6,231.5 516.8,232 517,231.2 517.2,233.4 517.4,231.1 517.6,231.4 517.8,231.5 518,229 518.2,232.7 518.4,224.8 518.6,235.7 518.8,230.4 519,229.8 519.2,233 519.4,234.3 519.6,228.7 519.8,229.8 520,239.9 520.2,227.8 520.4,236.2 520.6,236.4 520.8,231.1 520.9,234.1 521.1,234.8 521.3,236.5 521.5,233 521.7,228.1 521.9,229.2 522.1,235.9 522.3,231.2 522.5,236.3 522.7,234.7 522.9,229.2 523.1,234.6 523.3,228 523.5,228.4 523.7,236.3 523.9,228.5 524.1,234.1 524.3,228.8 524.5,236 524.7,234.9 524.9,231.2 525,235.9 525.2,236.3 525.4,229.4 525.6,229.3 525.8,233.2 526,236.8 526.2,231.9 526.4,228.2 526.6,234.8 526.8,232.4 527,231.7 527.2,230.5 527.4,236.3 527.6,228.3 527.8,228.8 528,227.8 528.2,230.2 528.4,239 528.6,233.6 528.8,229.2 529,226.5 529.1,231.4 529.3,229.5 529.5,235.5 529.7,235.5 529.9,236.5 530.1,230.6 530.3,232.3 530.5,229.2 530.7,229.5 530.9,233.6 531.1,229.8 531.3,227.8 531.5,232.9 531.7,228 531.9,228.8 532.1,234.3 532.3,236.2 532.5,228.1 532.7,235.5 532.9,236.2 533.1,236 533.2,229.3 533.4,229 533.6,232.8 533.8,229.6 534,233.1 534.2,232.6 534.4,235.7 534.6,232.9 534.8,229.3 535,228.9 535.2,235.3 535.4,229.2 535.6,230.9 535.8,236.3 536,232.9 536.2,228.2 536.4,234.4 536.6,231.7 536.8,228.3 537,237.8 537.2,229.3 537.3,230.9 537.5,233.7 537.7,235 537.9,232 538.1,231.7 538.3,235 538.5,229.4 538.7,231.8 538.9,231.7 539.1,229.5 539.3,230.1 539.5,231.5 539.7,236.2 539.9,230.7 540.1,232.5 540.3,239.4 540.5,228.3 540.7,231.5 540.9,233.3 541.1,234.5 541.3,228.9 541.4,234.7 541.6,233.4 541.8,229.1 542,232.1 542.2,231.8 542.4,231.7 542.6,234.6 542.8,232.8 543,228.2 543.2,231.6 543.4,232.6 543.6,229.6 543.8,234.7 544,234.9 544.2,236 544.4,235.2 544.6,231.3 544.8,232.4 545,234.1 545.2,230.5 545.4,230.1 545.6,227.9 545.7,231.8 545.9,234.1 546.1,232.8 546.3,230.3 546.5,228.1 546.7,232.3 546.9,231.1 547.1,240 547.3,232.8 547.5,231.3 547.7,231.8 547.9,231.7 548.1,230.7 548.3,232.9 548.5,232.4 548.7,232.1 548.9,235.3 549.1,235.1 549.3,235.2 549.5,227.8 549.7,240.3 549.8,232.7 550,232.4 550.2,233.3 550.4,232.7 550.6,232.4 550.8,231.1 551,233.4 551.2,232.1 551.4,232.3 551.6,232.1 551.8,231.3 552,231.9 552.2,232.8 552.4,230.8 552.6,231.9 552.8,232.9 553,232.1 553.2,231.1 553.4,233.6 553.6,231.8 553.8,232.3 553.9,232.9 554.1,233.3 554.3,233.1 554.5,232.4 554.7,232.5 554.9,231.9 555.1,232.9 555.3,231.9 555.5,232.3 555.7,231.3 555.9,231.3 556.1,233 556.3,230.8 556.5,232.1 556.7,232.7 556.9,233 557.1,231.6 557.3,232.4 557.5,231.7 557.7,233 557.9,231.1 558,233 558.2,231.1 558.4,232.4 558.6,232.5 558.8,232 559,232.2 559.2,232.1 559.4,232 559.6,230.8 559.8,231.5 560,233.5 560.2,230.7 560.4,233.7 560.6,233.6 560.8,231.2 561,232.9 561.2,233.7 561.4,233.2 561.6,232.2 561.8,231.2 562,233.7 562.1,233.3 562.3,233.7 562.5,233.6 562.7,232.8 562.9,232.3 563.1,230.8 563.3,231.8 563.5,231.1 563.7,232 563.9,231 564.1,231.7 564.3,233 564.5,232.6 564.7,232.3 564.9,233.4 565.1,230.9 565.3,232.3 565.5,233.2 565.7,232.3 565.9,231.3 566.1,232.9 566.3,232 566.4,233.5 566.6,233 566.8,233.2 567,232.2 567.2,231.7 567.4,233.1 567.6,231.6 567.8,232 568,231.5 568.2,230.7 568.4,232.7 568.6,230.7 568.8,232.4 569,232.2 569.2,233.2 569.4,233.5 569.6,231.8 569.8,233.5 570,236.4 570.2,231.9 570.4,234.4 570.5,232.7 570.7,230.6 570.9,231.1 571.1,231.9 571.3,229.2 571.5,234.5 571.7,235.8 571.9,232.2 572.1,231.7 572.3,228.3 572.5,229.4 572.7,232.7 572.9,232.3 573.1,235.6 573.3,228.5 573.5,233.9 573.7,233.5 573.9,226 574.1,229.3 574.3,231.5 574.5,236.6 574.6,232 574.8,231.9 575,233.4 575.2,232.3 575.4,229.9 575.6,231.4 575.8,233.5 576,228.6 576.2,229.1 576.4,235.5 576.6,234 576.8,229.9 577,235.2 577.2,232.5 577.4,236.5 577.6,229.5 577.8,236.6 578,235.1 578.2,234.7 578.4,234.1 578.6,232.3 578.7,231 578.9,232.4 579.1,229.3 579.3,234.9 579.5,229 579.7,228.6 579.9,231.5 580.1,234.1 580.3,235.4 580.5,233.5 580.7,235.2 580.9,236.6 581.1,232.5 581.3,236.1 581.5,228.7 581.7,231.8 581.9,231.5 582.1,230.6 582.3,234.2 582.5,234.3 582.7,229.5 582.8,234.2 583,230.9 583.2,229.7 583.4,227.8 583.6,230.6 583.8,230.9 584,228.3 584.2,231 584.4,231.2 584.6,228.6 584.8,229.9 585,233.7 585.2,230.8 585.4,232.7 585.6,227.9 585.8,230.8 586,232.4 586.2,236.1 586.4,228.3 586.6,230 586.8,229 586.9,232.3 587.1,233.6 587.3,228.9 587.5,235.5 587.7,234.3 587.9,234.5 588.1,231.8 588.3,230 588.5,233.2 588.7,232.6 588.9,229.4 589.1,233.4 589.3,230.6 589.5,230.1 589.7,235 589.9,233.1 590.1,235.7 590.3,233.4 590.5,234 590.7,235.3 590.9,234.1 591.1,234.3 591.2,228.5 591.4,235.8 591.6,234.3 591.8,232.7 592,232.6 592.2,231.6 592.4,233.5 592.6,232.3 592.8,236.6 593,236.2 593.2,228.4 593.4,230.6 593.6,231.5 593.8,234.5 594,229.1 594.2,233.8 594.4,230.1 594.6,228.6 594.8,231 595,229.4 595.2,229.2 595.3,231.1 595.5,234.6 595.7,230.5 595.9,230.6 596.1,228.5 596.3,228.5 596.5,231.9 596.7,235.3 596.9,232.1 597.1,233.9 597.3,230.6 597.5,235 597.7,230.9 597.9,228.9 598.1,232.6 598.3,234.3 598.5,235.5 598.7,235.4 598.9,228.3 599.1,227.8 599.3,236.6 599.4,229.6 599.6,233.8 599.8,233.9 600,233.7 600.2,233.4 600.4,233.2 600.6,234 600.8,236.2 601,228.9 601.2,229.6 601.4,235.8 601.6,232.7 601.8,229.4 602,234.6 602.2,230.4 602.4,231.1 602.6,228.1 602.8,233.7 603,232.1 603.2,233.3 603.4,232.7 603.5,235.2 603.7,230.4 603.9,235.9 604.1,232.6 604.3,236.3 604.5,229.7 604.7,236.2 604.9,233.9 605.1,232.2 605.3,229.2 605.5,233.2 605.7,232.5 605.9,229 606.1,234.8 606.3,232.3 606.5,233.9 606.7,236.1 606.9,230.2 607.1,228.4 607.3,235.6 607.5,228.1 607.6,229.5 607.8,234.2 608,230.6 608.2,235 608.4,236.4 608.6,235.1 608.8,227.9 609,231.7 609.2,233.3 609.4,230.6 609.6,234.4 609.8,229 610,229.5 610.2,232.4 610.4,228.4 610.6,229.2 610.8,233.3 611,232.8 611.2,232.6 611.4,234.4 611.6,229.4 611.7,230 611.9,229.2 612.1,225.6 612.3,231 612.5,231.5 612.7,234.3 612.9,228.9 613.1,236.4 613.3,231.2 613.5,231.7 613.7,229.9 613.9,230.8 614.1,233.1 614.3,232.9 614.5,232.7 614.7,231.5 614.9,232.1 615.1,232.8 615.3,233.6 615.5,231.4 615.7,231.5 615.9,231.2 616,231.4 616.2,233.6 616.4,232.9 616.6,232.3 616.8,232.9 617,231.2 617.2,233.1 617.4,233.7 617.6,232.4 617.8,233.6 618,233.7 618.2,231.9 618.4,231.9 618.6,232.1 618.8,233.5 619,232 619.2,232.2 619.4,232.8 619.6,233.1 619.8,233.3 620,232.3 620.1,232.6 620.3,232 620.5,231.7 620.7,232.9 620.9,231.9 621.1,233 621.3,231.5 621.5,233.1 621.7,231.9 621.9,231.5 622.1,231.3 622.3,232.1 622.5,231 622.7,230.8 622.9,231.3 623.1,232.7 623.3,232.9 623.5,231.8 623.7,233.4 623.9,233.2 624.1,233.5 624.2,231.8 624.4,232.6 624.6,230.9 624.8,231.3 625,232.1 625.2,232.7 625.4,232.8 625.6,233.6 625.8,233.4 626,231.1 626.2,232.8 626.4,233.7 626.6,230.8 626.8,232.6 627,231.4 627.2,232.4 627.4,230.8 627.6,233.5 627.8,232.3 628,231.8 628.2,233.7 628.3,231 628.5,232.7 628.7,231.7 628.9,233.5 629.1,233.5 629.3,233.5 629.5,231.4 629.7,230.9 629.9,231 630.1,232.1 630.3,233.5 630.5,231.4 630.7,232.2 630.9,231.4 631.1,231.8 631.3,232 631.5,233.2 631.7,233.3 631.9,233.5 632.1,232.4 632.3,232.9 632.4,230.9 632.6,233.6 632.8,231.4 633,235.6 633.2,228.5 633.4,231.4 633.6,233.1 633.8,235.4 634,233.4 634.2,229.4 634.4,232.9 634.6,228.4 634.8,234.9 635,236.5 635.2,236 635.4,232.2 635.6,234.8 635.8,233.9 636,236.2 636.2,232.7 636.4,234.1 636.5,235.8 636.7,234.7 636.9,236 637.1,228.2 637.3,235.1 637.5,231 637.7,234.7 637.9,234.5 638.1,230.5 638.3,229.5 638.5,234.8 638.7,231.4 638.9,231.1 639.1,234.6 639.3,235.9 639.5,231.5 639.7,228.9 639.9,235.3 640.1,225.7 640.3,235 640.5,229.3 640.7,236.6 640.8,233.8 641,232.5 641.2,227.9 641.4,228.6 641.6,235.6 641.8,235.5 642,229.5 642.2,234.1 642.4,232.4 642.6,236.3 642.8,235.6 643,224.2 643.2,231.4 643.4,231.8 643.6,228.4 643.8,235 644,233.9 644.2,238 644.4,229.6 644.6,230.3 644.8,228.4 644.9,233.7 645.1,232.7 645.3,235.2 645.5,234.3 645.7,228.5 645.9,229.1 646.1,228.3 646.3,228 646.5,233.3 646.7,229.8 646.9,228.7 647.1,234.7 647.3,230.9 647.5,236 647.7,235.5 647.9,232.4 648.1,233.9 648.3,235.1 648.5,229.2 648.7,234.2 648.9,229.9 649,228.3 649.2,230.7 649.4,233.4 649.6,233.2 649.8,234.8 650,236.3 650.2,235.9 650.4,235.9 650.6,231.9 650.8,228.9 651,228.6 651.2,232.2 651.4,228.4 651.6,231.8 651.8,236.3 652,234 652.2,231.6 652.4,234.8 652.6,233.3 652.8,231.1 653,229.9 653.1,234.9 653.3,234.2 653.5,229.7 653.7,231.8 653.9,231.7 654.1,235.2 654.3,234.9 654.5,230.3 654.7,231.6 654.9,229.2 655.1,232.1 655.3,231 655.5,234.1 655.7,230.7 655.9,230.1 656.1,230.2 656.3,234.3 656.5,231.2 656.7,233.9 656.9,234 657.1,229.3 657.2,229.5 657.4,235.2 657.6,230.1 657.8,231.3 658,232.7 658.2,231.8 658.4,234.6 658.6,233.9 658.8,232.4 659,235.7 659.2,227.9 659.4,233.1 659.6,232 659.8,228.7 660,232.7 660.2,233.1 660.4,232.2 660.6,229.7 660.8,236.4 661,232.4 661.2,231.2 661.3,234.7 661.5,229.3 661.7,234.4 661.9,234.8 662.1,236.4 662.3,233.6 662.5,234.7 662.7,230.7 662.9,235.3 663.1,236.5 663.3,236.5 663.5,233.3 663.7,228.9 663.9,236.1 664.1,235 664.3,233.8 664.5,236.5 664.7,233 664.9,231.3 665.1,234 665.3,230 665.5,235.5 665.6,229.9 665.8,228.2 666,230 666.2,233.1 666.4,234.2 666.6,231.1 666.8,237.5 667,234.8 667.2,229.6 667.4,230.8 667.6,228.4 667.8,229.9 668,232.3 668.2,228.6 668.4,233.2 668.6,235.1 668.8,233.8 669,224.5 669.2,232.4 669.4,234.3 669.6,234 669.7,232.9 669.9,235.5 670.1,231.7 670.3,233 670.5,234.4 670.7,235.9 670.9,231.8 671.1,229.5 671.3,235.5 671.5,228.2 671.7,229.7 671.9,231.6 672.1,233.9 672.3,229.8 672.5,236 672.7,230.4 672.9,236.4 673.1,229.8 673.3,233.7 673.5,229.5 673.7,230.3 673.8,232.6 674,231.1 674.2,234.9 674.4,234 674.6,230 674.8,228.7 675,228.1 675.2,230.2 675.4,233 675.6,235.7 675.8,233.3 676,235.9 676.2,233.7 676.4,231.1 676.6,235.2 676.8,230.6 677,232.3 677.2,233 677.4,236.1 677.6,229.7 677.8,233.7 677.9,234 678.1,235.8 678.3,230.4 678.5,230.2 678.7,231.2 678.9,233.8 679.1,231.3 679.3,236.3 679.5,229.1 679.7,234.8 679.9,234.6 680.1,235.9 680.3,228.9 680.5,231.5 680.7,229.2 680.9,233.3 681.1,228.4 681.3,231.1 681.5,235.8 681.7,234.6 681.9,230.9 682,239 682.2,235.2 682.4,229.8 682.6,230.6 682.8,235.3 683,234.5 683.2,227 683.4,232 683.6,231.7 683.8,229.5 684,231.9 684.2,234.4 684.4,228.6 684.6,233.7 684.8,228.9 685,228 685.2,234.9 685.4,229.9 685.6,229.6 685.8,229.4 686,236.2 686.2,235.9 686.3,240.4 686.5,228.6 686.7,234.8 686.9,236.4 687.1,230.9 687.3,228.5 687.5,233.8 687.7,228.4 687.9,228.1 688.1,229.7 688.3,232.9 688.5,228.5 688.7,236.4 688.9,229 689.1,232.4 689.3,230 689.5,230.5 689.7,236.5 689.9,232.8 690.1,236.5 690.3,233.9 690.4,230.9 690.6,230.9 690.8,235.6 691,233.1 691.2,230.2 691.4,229 691.6,230.2 691.8,232.1 692,229.2 692.2,235.2 692.4,230.4 692.6,234.9 692.8,230 693,235.2 693.2,231.2 693.4,228.7 693.6,229.3 693.8,235.5 694,231.8 694.2,232.7 694.4,234.5 694.5,233.8 694.7,236.3 694.9,236.4 695.1,228.3 695.3,231.4 695.5,236 695.7,232.3 695.9,236.3 696.1,234.6 696.3,236.4 696.5,233.3 696.7,229.2 696.9,234.5 697.1,233.5 697.3,230.9 697.5,232.5 697.7,232.6 697.9,230.6 698.1,232.1 698.3,230.7 698.5,235.4 698.6,228.3 698.8,228.9 699,230.5 699.2,231.5 699.4,232.2 699.6,230.9 699.8,232.2 700,231.8 700.2,231.7 700.4,231.8 700.6,233.2 700.8,232 701,232.4 701.2,231.7 701.4,231.4 701.6,233.1 701.8,232.6 702,233 702.2,230.9 702.4,232.3 702.6,232.4 702.7,230.8 702.9,231.4 703.1,231.2 703.3,232.2 703.5,233.3 703.7,232.6 703.9,233.5 704.1,232.5 704.3,232.4 704.5,232.3 704.7,230.8 704.9,232.1 705.1,233.2 705.3,233.2 705.5,231.7 705.7,232.2 705.9,232.5 706.1,232.3 706.3,232.5 706.5,231.7 706.7,232 706.8,233.6 707,232.2 707.2,233 707.4,232 707.6,232.3 707.8,231.5 708,230.8 708.2,231.5 708.4,231.9 708.6,232.2 708.8,233.4 709,231.5 709.2,233.1 709.4,232.6 709.6,232 709.8,232.9 710,231.2 710.2,232.1 710.4,230.8 710.6,233.7 710.8,232.3 711,232.8 711.1,232 711.3,231.8 711.5,232 711.7,230.9 711.9,232.4 712.1,232.6 712.3,231.5 712.5,232.1 712.7,232.9 712.9,231 713.1,233.1 713.3,233.5 713.5,232.1 713.7,231 713.9,231.2 714.1,231.3 714.3,231.9 714.5,232.2 714.7,232.9 714.9,233.2 715.1,232.4 715.2,231.2 715.4,232.1 715.6,230.8 715.8,231.3 716,232.1 716.2,232 716.4,232.5 716.6,231 716.8,231.2 717,233.2 717.2,231 717.4,231.7 717.6,232.6 717.8,231.5 718,232.5 718.2,231.7 718.4,232.2 718.6,231.8 718.8,231 719,231.1 719.2,232.3 719.3,232.6 719.5,231.6 719.7,231.7 719.9,233.4 720.1,232.2 720.3,232.9 720.5,231.8 720.7,233.2 720.9,232.8 721.1,233 721.3,232.9 721.5,232 721.7,231.2 721.9,231.8 722.1,231.8 722.3,231.5 722.5,232.6 722.7,232.4 722.9,231.8 723.1,233.1 723.3,231.5 723.4,231 723.6,231.1 723.8,233.5 724,231 724.2,233.1 724.4,233.3 724.6,231.9 724.8,232.7 725,233.2 725.2,231.9 725.4,232.1 725.6,232.1 725.8,232.2 726,231.9 726.2,231.4 726.4,231.6 726.6,231.6 726.8,231.3 727,232.3 727.2,231.8 727.4,233.4 727.5,233.5 727.7,232.4 727.9,231.7 728.1,233 728.3,230.9 728.5,232.9 728.7,232.3 728.9,232.3 729.1,230.8 729.3,233.3 729.5,233 729.7,231.8 729.9,232.6 730.1,232.7 730.3,233.3 730.5,231 730.7,232.4 730.9,232 731.1,233 731.3,230.9 731.5,233.4 731.6,231.6 731.8,233.5 732,232.1 732.2,232.8 732.4,230.9 732.6,232.4 732.8,231.2 733,233.6 733.2,233 733.4,230.8 733.6,232.6 733.8,233.6 734,232.9 734.2,232.6 734.4,232.2 734.6,232.6 734.8,232.8 735,232.3 735.2,232.5 735.4,232.1 735.6,231.6 735.8,232.6 735.9,228.4 736.1,233.9 736.3,233 736.5,229.1 736.7,231.8 736.9,235.4 737.1,235.4 737.3,230.3 737.5,228.5 737.7,232.6 737.9,233.3 738.1,232.3 738.3,235.9 738.5,230.5 738.7,232.3 738.9,230 739.1,230.4 739.3,235.6 739.5,229.3 739.7,234.5 739.9,236.2 740,233.9 740.2,233.2 740.4,232.8 740.6,230.9 740.8,234.8 741,233.7 741.2,232.2 741.4,228.1 741.6,234 741.8,236.5 742,236.2 742.2,231.5 742.4,228 742.6,236.4 742.8,234.5 743,230.2 743.2,229 743.4,234.6 743.6,232 743.8,233.9 744,231.1 744.1,231.6 744.3,231.7 744.5,236.4 744.7,233.9 744.9,229.9 745.1,235.4 745.3,229 745.5,236.3 745.7,229 745.9,232.2 746.1,231.7 746.3,231.4 746.5,232.5 746.7,229.9 746.9,233.9 747.1,228.1 747.3,235.9 747.5,232.9 747.7,234.1 747.9,232.4 748.1,234.3 748.2,231.8 748.4,232.8 748.6,231.7 748.8,233.4 749,234.2 749.2,234.3 749.4,233.4 749.6,230.8 749.8,228.8 750,234.2 750.2,234 750.4,233.9 750.6,236.1 750.8,229 751,234.3 751.2,233.4 751.4,234.2 751.6,231 751.8,234.3 752,231.7 752.2,232.4 752.3,228.6 752.5,233 752.7,231.6 752.9,229.9 753.1,232.1 753.3,234.3 753.5,236.4 753.7,229.5 753.9,228.2 754.1,235.6 754.3,228.6 754.5,229 754.7,235.2 754.9,230.3 755.1,236.2 755.3,234.9 755.5,224.1 755.7,230.2 755.9,236 756.1,231.3 756.3,234.8 756.4,235.4 756.6,230.4 756.8,229.6 757,229.2 757.2,228.9 757.4,231.2 757.6,234.8 757.8,228.2 758,232.7 758.2,231.2 758.4,235.5 758.6,231.4 758.8,235.4 759,229.9 759.2,235.1 759.4,232.6 759.6,235.4 759.8,233.2 760,230.1 760.2,230 760.4,232.1 760.6,229.5 760.7,234.2 760.9,231.4 761.1,229.6 761.3,236 761.5,229.6 761.7,230.6 761.9,233.6 762.1,233.4 762.3,230.7 762.5,232.1 762.7,235.6 762.9,233.2 763.1,229.8 763.3,230.2 763.5,234.8 763.7,230.3 763.9,228.8 764.1,233 764.3,229.6 764.5,232.3 764.7,231.3 764.8,233.9 765,228.9 765.2,235.4 765.4,230.6 765.6,234.7 765.8,233.7 766,236.4 766.2,231.5 766.4,235.6 766.6,233.7 766.8,229.4 767,231.6 767.2,230.5 767.4,229.9 767.6,236.2 767.8,235.5 768,232.7 768.2,235.2 768.4,229.6 768.6,228.7 768.8,228.1 768.9,235.5 769.1,230.6 769.3,234.2 769.5,232.7 769.7,233.3 769.9,233.4 770.1,234.5 770.3,237.6 770.5,228.5 770.7,230.2 770.9,236.2 771.1,234.3 771.3,234.9 771.5,232.8 771.7,234.1 771.9,229.9 772.1,228.5 772.3,234.7 772.5,233.8 772.7,239.9 772.9,230.6 773,235.5 773.2,235.1 773.4,229.1 773.6,235.1 773.8,234.1 774,230.5 774.2,232 774.4,230.1 774.6,230.6 774.8,231.7 775,229.4 775.2,229.6 775.4,232.2 775.6,229.1 775.8,230.1 776,231.9 776.2,229.2 776.4,229.5 776.6,235.8 776.8,234 777,236.2 777.1,231.4 777.3,235.2 777.5,230.7 777.7,232.8 777.9,233.6 778.1,229.7 778.3,234.4 778.5,230.1 778.7,236.1 778.9,236.4 779.1,229.8 779.3,236.3 779.5,235.2 779.7,232.9 779.9,233.2 780.1,228 780.3,234.7 780.5,234.6 780.7,235.9 780.9,235.6 781.1,230.5 781.2,232.6 781.4,235.9 781.6,231.2 781.8,230.2 782,229.2 782.2,232.1 782.4,230 782.6,234.8 782.8,233.1 783,231 783.2,228.4 783.4,235.1 783.6,235.7 783.8,229.1 784,234.6 784.2,231.1 784.4,229.6 784.6,233.6 784.8,233.4 785,232 785.2,233.4 785.4,230.6 785.5,230.6 785.7,233.1 785.9,228.6 786.1,231.8 786.3,232.3 786.5,231.9 786.7,231.9 786.9,232.5 787.1,232.3 787.3,231.6 787.5,233.6 787.7,233.6 787.9,232.8 788.1,231.1 788.3,231.4 788.5,232 788.7,231.1 788.9,232.6 789.1,231.9 789.3,230.8 789.5,231.1 789.6,231.5 789.8,232.5 790,232.9 790.2,231 790.4,231.2 790.6,232.6 790.8,232.5 791,232.5 791.2,233.1 791.4,232.7 791.6,233.4 791.8,230.9 792,233.6 792.2,233.2 792.4,231.2 792.6,231.4 792.8,233.6 793,232 793.2,230.8 793.4,231.1 793.6,233.4 793.7,233.5 793.9,231.1 794.1,231 794.3,232.4 794.5,231.4 794.7,233.5 794.9,232.6 795.1,232.2 795.3,233 795.5,231.7 795.7,231.6 795.9,233.1 796.1,233.4 796.3,231 796.5,231.9 796.7,232.8 796.9,231 797.1,231.3 797.3,233.1 797.5,232.5 797.7,233.6 797.8,232.8 798,232.2 798.2,231.6 798.4,233.4 798.6,233.4 798.8,231 799,233.4 799.2,231.6 799.4,231.7 799.6,232.6 799.8,230.8 800,231.5 800.2,233.3 800.4,231.9 800.6,231.9 800.8,230.8 801,231.1 801.2,231.3 801.4,231.4 801.6,232.3 801.8,232.1 801.9,233.7 802.1,231 802.3,231.2 802.5,232.2 802.7,231 802.9,231.5 803.1,231.8 803.3,233.6 803.5,232.5 803.7,233.3 803.9,232.8 804.1,231.2 804.3,233.7 804.5,231.8 804.7,231 804.9,231.3 805.1,232.7 805.3,232.6 805.5,230.8 805.7,231.7 805.9,232.4 806.1,233.3 806.2,232.4 806.4,233.6 806.6,233.1 806.8,231.2 807,233.5 807.2,232.2 807.4,233.6 807.6,231.7 807.8,231.2 808,231.2 808.2,231.4 808.4,230.8 808.6,231.2 808.8,231.2 809,230.9 809.2,233.1 809.4,233.2 809.6,231.6 809.8,233.5 810,230.9 810.2,231.7 810.3,230.9 810.5,232.9 810.7,232.9 810.9,233.5 811.1,233.3 811.3,232.6 811.5,232.4 811.7,232 811.9,231 812.1,233.1 812.3,232.9 812.5,233.4 812.7,230.9 812.9,232.1 813.1,230.8 813.3,233 813.5,231 813.7,232.2 813.9,231 814.1,232.4 814.3,233 814.4,231.6 814.6,233.4 814.8,230.9 815,232.9 815.2,233.3 815.4,232.5 815.6,232.4 815.8,232.4 816,232.3 816.2,232.4 816.4,231.5 816.6,233 816.8,232.1 817,232.2 817.2,232.9 817.4,233.5 817.6,231.5 817.8,233 818,231.8 818.2,232 818.4,233.7 818.5,233.1 818.7,232.2 818.9,232.7 819.1,230.9 819.3,233 819.5,231.9 819.7,231.7 819.9,232.5 820.1,232.9 820.3,232.4 820.5,231.6 820.7,232.8 820.9,232.4 821.1,231.8 821.3,233.6 821.5,231.1 821.7,231.3 821.9,231.8 822.1,232.8 822.3,231.4 822.5,231.8 822.6,231.9 822.8,232.1 823,231.8 823.2,231.7 823.4,231.8 823.6,230.8 823.8,231.6 824,232.7 824.2,230.8 824.4,232.4 824.6,233.3 824.8,231.6 825,236.3 825.2,230.1 825.4,232.5 825.6,230.3 825.8,233.6 826,234.4 826.2,228.2 826.4,234.3 826.6,229.6 826.7,228.2 826.9,230.3 827.1,235.5 827.3,235.7 827.5,233.7 827.7,230.7 827.9,232.6 828.1,236.3 828.3,229.9 828.5,235.2 828.7,233.2 828.9,232.6 829.1,228.9 829.3,234.7 829.5,232.9 829.7,230.3 829.9,234.9 830.1,229.5 830.3,231.2 830.5,229.4 830.7,234.2 830.9,232.1 831,230.3 831.2,234.5 831.4,236.1 831.6,233.7 831.8,228.1 832,229.7 832.2,236.3 832.4,234 832.6,229.3 832.8,231 833,234.9 833.2,234.5 833.4,229.6 833.6,229.4 833.8,233 834,229.1 834.2,236.3 834.4,229.3 834.6,231.4 834.8,228.5 835,235.1 835.1,235.3 835.3,228.9 835.5,231.8 835.7,236.1 835.9,229.4 836.1,235.1 836.3,235.7 836.5,235.4 836.7,230.5 836.9,233.8 837.1,233.1 837.3,235.4 837.5,233.9 837.7,228.1 837.9,229.7 838.1,228.9 838.3,229 838.5,231.1 838.7,230.5 838.9,230.3 839.1,234 839.2,232.8 839.4,232.6 839.6,230.8 839.8,235.2 840,234.4 840.2,236.3 840.4,232 840.6,230.1 840.8,235.5 841,235.5 841.2,228.7 841.4,233.9 841.6,232.2 841.8,234.8 842,229.1 842.2,235.6 842.4,235 842.6,235.7 842.8,228.6 843,230 843.2,235.1 843.3,235 843.5,230.7 843.7,232.5 843.9,235.4 844.1,231 844.3,228.9 844.5,229.9 844.7,233.5 844.9,232.2 845.1,232.2 845.3,228.4 845.5,233.8 845.7,234.1 845.9,233.8 846.1,231.7 846.3,233.9 846.5,230.1 846.7,232.9 846.9,229 847.1,229 847.3,235.9 847.4,231.1 847.6,235.8 847.8,235.8 848,233.8 848.2,235.3 848.4,232.1 848.6,233.3 848.8,231.5 849,231 849.2,233.9 849.4,233.7 849.6,229.5 849.8,235.3 850,236.4 850.2,234.6 850.4,235.3 850.6,229.9 850.8,230.5 851,228.9 851.2,229.9 851.4,224.8 851.5,229.9 851.7,231.8 851.9,231.5 852.1,232.6 852.3,232.5 852.5,234.7 852.7,231.6 852.9,233.8 853.1,232.2 853.3,231 853.5,233.5 853.7,231.1 853.9,232.1 854.1,231 854.3,232.5 854.5,231.8 854.7,233.6 854.9,233 855.1,231.8 855.3,232.7 855.5,232.2 855.7,230.9 855.8,232.1 856,231.8 856.2,232 856.4,232.9 856.6,230.8 856.8,232.6 857,233.6 857.2,232.4 857.4,232.5 857.6,233.1 857.8,232.4 858,233.5 858.2,231 858.4,232.2 858.6,232.8 858.8,232.1 859,232 859.2,232.6 859.4,231.3 859.6,232.4 859.8,231 859.9,231.5 860.1,231.7 860.3,233.2 860.5,231.7 860.7,230.9 860.9,231.3 861.1,233.5 861.3,232.9 861.5,233.7 861.7,231.8 861.9,231.1 862.1,231.7 862.3,231.8 862.5,232.1 862.7,231.6 862.9,232.1 863.1,231.4 863.3,233.2 863.5,232.3 863.7,231.9 863.9,233.5 864,232.1 864.2,231 864.4,233.4 864.6,231.6 864.8,231.6 865,231.1 865.2,230.9 865.4,231.8 865.6,232 865.8,232.3 866,232.6" fill="none" stroke="#edb120" stroke-width="3.2" stroke-linejoin="round"/>
<g fill="#edb120"><circle cx="150.3" cy="241.6" r="1.5"/><circle cx="151.1" cy="241.4" r="1.5"/><circle cx="159.1" cy="240.6" r="1.5"/><circle cx="169.1" cy="226.6" r="1.5"/><circle cx="182.7" cy="224.3" r="1.5"/><circle cx="185.7" cy="239.7" r="1.5"/><circle cx="196.8" cy="225" r="1.5"/><circle cx="213.4" cy="239.8" r="1.5"/><circle cx="218.9" cy="226.6" r="1.5"/><circle cx="226.1" cy="224" r="1.5"/><circle cx="273.3" cy="238.2" r="1.5"/><circle cx="275.1" cy="238.7" r="1.5"/><circle cx="288.8" cy="224.4" r="1.5"/><circle cx="351.6" cy="238.5" r="1.5"/><circle cx="373.9" cy="224.9" r="1.5"/><circle cx="391.3" cy="240.2" r="1.5"/><circle cx="401.4" cy="240" r="1.5"/><circle cx="410" cy="225.4" r="1.5"/><circle cx="417.3" cy="239.7" r="1.5"/><circle cx="419.8" cy="240.5" r="1.5"/><circle cx="422.1" cy="225.2" r="1.5"/><circle cx="428.2" cy="225.8" r="1.5"/><circle cx="468.4" cy="240.5" r="1.5"/><circle cx="481.1" cy="240.4" r="1.5"/><circle cx="484.6" cy="239.9" r="1.5"/><circle cx="518.4" cy="224.8" r="1.5"/><circle cx="520" cy="239.9" r="1.5"/><circle cx="528.4" cy="239" r="1.5"/><circle cx="529" cy="226.5" r="1.5"/><circle cx="537" cy="237.8" r="1.5"/><circle cx="540.3" cy="239.4" r="1.5"/><circle cx="547.1" cy="240" r="1.5"/><circle cx="549.7" cy="240.3" r="1.5"/><circle cx="573.9" cy="226" r="1.5"/><circle cx="612.1" cy="225.6" r="1.5"/><circle cx="640.1" cy="225.7" r="1.5"/><circle cx="643" cy="224.2" r="1.5"/><circle cx="644.2" cy="238" r="1.5"/><circle cx="666.8" cy="237.5" r="1.5"/><circle cx="669" cy="224.5" r="1.5"/><circle cx="682" cy="239" r="1.5"/><circle cx="683.2" cy="227" r="1.5"/><circle cx="686.3" cy="240.4" r="1.5"/><circle cx="755.5" cy="224.1" r="1.5"/><circle cx="770.3" cy="237.6" r="1.5"/><circle cx="772.7" cy="239.9" r="1.5"/><circle cx="851.4" cy="224.8" r="1.5"/><circle cx="74.5" cy="120" r="1.5"/><circle cx="74.6" cy="129.1" r="1.5"/><circle cx="74.7" cy="136.8" r="1.5"/><circle cx="74.8" cy="144.6" r="1.5"/><circle cx="74.9" cy="156.3" r="1.5"/><circle cx="75" cy="171.8" r="1.5"/><circle cx="75.1" cy="190" r="1.5"/><circle cx="75.2" cy="210.7" r="1.5"/><circle cx="75.4" cy="218.5" r="1.5"/><circle cx="75.6" cy="254.8" r="1.5"/><circle cx="75.7" cy="275.5" r="1.5"/><circle cx="75.9" cy="262.6" r="1.5"/><circle cx="76.1" cy="270.3" r="1.5"/><circle cx="76.2" cy="213.3" r="1.5"/><circle cx="76.4" cy="257.4" r="1.5"/><circle cx="76.5" cy="215.9" r="1.5"/><circle cx="76.7" cy="250.9" r="1.5"/><circle cx="76.9" cy="222.4" r="1.5"/><circle cx="77" cy="247" r="1.5"/><circle cx="77.2" cy="213.3" r="1.5"/><circle cx="77.3" cy="249.6" r="1.5"/><circle cx="77.5" cy="218.5" r="1.5"/><circle cx="77.6" cy="244.4" r="1.5"/></g>
<path d="M74.5,120 74.6,129.1 74.7,136.8 74.8,144.6 74.9,156.3 75,171.8 75.1,190 75.2,210.7 75.4,218.5" fill="none" stroke="#edb120" stroke-width="1.2"/>
<path d="M74.5,660.5 L74.5,681.5 M303.5,677 L303.5,681.5 M310.5,681.5 L310.5,719.5" fill="none" stroke="#4dbeee" stroke-width="1.2"/>
<circle cx="74.5" cy="660.5" r="1.6" fill="#4dbeee"/>
<circle cx="303.5" cy="677" r="1.6" fill="#4dbeee"/>
<circle cx="310.5" cy="719.5" r="1.6" fill="#4dbeee"/>
<path d="M74.5,676 L74.5,695 M310.5,681 L310.5,689" fill="none" stroke="#0072bd" stroke-width="1.6"/>
<circle cx="74.5" cy="695" r="1.6" fill="#0072bd"/><circle cx="310.5" cy="689" r="2" fill="#0072bd"/>
<path d="M74,681.5 L866,681.5" stroke="#0072bd" stroke-width="3"/>
<path d="M85.2,681.4L94.4,681.4M89.8,676.8L89.8,686M86.6,678.1L93.1,684.7M86.6,684.7L93.1,678.1M101.1,681.4L110.3,681.4M105.7,676.8L105.7,686M102.4,678.1L108.9,684.7M102.4,684.7L108.9,678.1M116.9,681.4L126.1,681.4M121.5,676.8L121.5,686M118.3,678.1L124.8,684.7M118.3,684.7L124.8,678.1M132.8,681.4L142,681.4M137.4,676.8L137.4,686M134.1,678.1L140.6,684.7M134.1,684.7L140.6,678.1M148.6,681.4L157.8,681.4M153.2,676.8L153.2,686M149.9,678.1L156.5,684.7M149.9,684.7L156.5,678.1M164.4,681.4L173.6,681.4M169,676.8L169,686M165.8,678.1L172.3,684.7M165.8,684.7L172.3,678.1M180.3,681.4L189.5,681.4M184.9,676.8L184.9,686M181.6,678.1L188.1,684.7M181.6,684.7L188.1,678.1M196.1,681.4L205.3,681.4M200.7,676.8L200.7,686M197.5,678.1L204,684.7M197.5,684.7L204,678.1M212,681.4L221.2,681.4M216.6,676.8L216.6,686M213.3,678.1L219.8,684.7M213.3,684.7L219.8,678.1M227.8,681.4L237,681.4M232.4,676.8L232.4,686M229.1,678.1L235.7,684.7M229.1,684.7L235.7,678.1M243.6,681.4L252.8,681.4M248.2,676.8L248.2,686M245,678.1L251.5,684.7M245,684.7L251.5,678.1M259.5,681.4L268.7,681.4M264.1,676.8L264.1,686M260.8,678.1L267.3,684.7M260.8,684.7L267.3,678.1M275.3,681.4L284.5,681.4M279.9,676.8L279.9,686M276.7,678.1L283.2,684.7M276.7,684.7L283.2,678.1M291.2,681.4L300.4,681.4M295.8,676.8L295.8,686M292.5,678.1L299,684.7M292.5,684.7L299,678.1M307,681.4L316.2,681.4M311.6,676.8L311.6,686M308.3,678.1L314.9,684.7M308.3,684.7L314.9,678.1M322.8,681.4L332,681.4M327.4,676.8L327.4,686M324.2,678.1L330.7,684.7M324.2,684.7L330.7,678.1M338.7,681.4L347.9,681.4M343.3,676.8L343.3,686M340,678.1L346.5,684.7M340,684.7L346.5,678.1M354.5,681.4L363.7,681.4M359.1,676.8L359.1,686M355.9,678.1L362.4,684.7M355.9,684.7L362.4,678.1M370.4,681.4L379.6,681.4M375,676.8L375,686M371.7,678.1L378.2,684.7M371.7,684.7L378.2,678.1M386.2,681.4L395.4,681.4M390.8,676.8L390.8,686M387.5,678.1L394.1,684.7M387.5,684.7L394.1,678.1M402,681.4L411.2,681.4M406.6,676.8L406.6,686M403.4,678.1L409.9,684.7M403.4,684.7L409.9,678.1M417.9,681.4L427.1,681.4M422.5,676.8L422.5,686M419.2,678.1L425.7,684.7M419.2,684.7L425.7,678.1M433.7,681.4L442.9,681.4M438.3,676.8L438.3,686M435.1,678.1L441.6,684.7M435.1,684.7L441.6,678.1M449.6,681.4L458.8,681.4M454.2,676.8L454.2,686M450.9,678.1L457.4,684.7M450.9,684.7L457.4,678.1M465.4,681.4L474.6,681.4M470,676.8L470,686M466.7,678.1L473.3,684.7M466.7,684.7L473.3,678.1M481.2,681.4L490.4,681.4M485.8,676.8L485.8,686M482.6,678.1L489.1,684.7M482.6,684.7L489.1,678.1M497.1,681.4L506.3,681.4M501.7,676.8L501.7,686M498.4,678.1L504.9,684.7M498.4,684.7L504.9,678.1M512.9,681.4L522.1,681.4M517.5,676.8L517.5,686M514.3,678.1L520.8,684.7M514.3,684.7L520.8,678.1M528.8,681.4L538,681.4M533.4,676.8L533.4,686M530.1,678.1L536.6,684.7M530.1,684.7L536.6,678.1M544.6,681.4L553.8,681.4M549.2,676.8L549.2,686M545.9,678.1L552.5,684.7M545.9,684.7L552.5,678.1M560.4,681.4L569.6,681.4M565,676.8L565,686M561.8,678.1L568.3,684.7M561.8,684.7L568.3,678.1M576.3,681.4L585.5,681.4M580.9,676.8L580.9,686M577.6,678.1L584.1,684.7M577.6,684.7L584.1,678.1M592.1,681.4L601.3,681.4M596.7,676.8L596.7,686M593.5,678.1L600,684.7M593.5,684.7L600,678.1M608,681.4L617.2,681.4M612.6,676.8L612.6,686M609.3,678.1L615.8,684.7M609.3,684.7L615.8,678.1M623.8,681.4L633,681.4M628.4,676.8L628.4,686M625.1,678.1L631.7,684.7M625.1,684.7L631.7,678.1M639.6,681.4L648.8,681.4M644.2,676.8L644.2,686M641,678.1L647.5,684.7M641,684.7L647.5,678.1M655.5,681.4L664.7,681.4M660.1,676.8L660.1,686M656.8,678.1L663.3,684.7M656.8,684.7L663.3,678.1M671.3,681.4L680.5,681.4M675.9,676.8L675.9,686M672.7,678.1L679.2,684.7M672.7,684.7L679.2,678.1M687.2,681.4L696.4,681.4M691.8,676.8L691.8,686M688.5,678.1L695,684.7M688.5,684.7L695,678.1M703,681.4L712.2,681.4M707.6,676.8L707.6,686M704.3,678.1L710.9,684.7M704.3,684.7L710.9,678.1M718.8,681.4L728,681.4M723.4,676.8L723.4,686M720.2,678.1L726.7,684.7M720.2,684.7L726.7,678.1M734.7,681.4L743.9,681.4M739.3,676.8L739.3,686M736,678.1L742.5,684.7M736,684.7L742.5,678.1M750.5,681.4L759.7,681.4M755.1,676.8L755.1,686M751.9,678.1L758.4,684.7M751.9,684.7L758.4,678.1M766.4,681.4L775.6,681.4M771,676.8L771,686M767.7,678.1L774.2,684.7M767.7,684.7L774.2,678.1M782.2,681.4L791.4,681.4M786.8,676.8L786.8,686M783.5,678.1L790.1,684.7M783.5,684.7L790.1,678.1M798,681.4L807.2,681.4M802.6,676.8L802.6,686M799.4,678.1L805.9,684.7M799.4,684.7L805.9,678.1M813.9,681.4L823.1,681.4M818.5,676.8L818.5,686M815.2,678.1L821.7,684.7M815.2,684.7L821.7,678.1M829.7,681.4L838.9,681.4M834.3,676.8L834.3,686M831.1,678.1L837.6,684.7M831.1,684.7L837.6,678.1M845.6,681.4L854.8,681.4M850.2,676.8L850.2,686M846.9,678.1L853.4,684.7M846.9,684.7L853.4,678.1M861.4,681.4L870.6,681.4M866,676.8L866,686M862.7,678.1L869.3,684.7M862.7,684.7L869.3,678.1" stroke="#cf0a8c" stroke-width="1.45" fill="none"/>
<g font-family="Liberation Sans" font-size="12" fill="#262626">
<text x="70" y="123.7" text-anchor="end">0</text>
<text x="70" y="188.5" text-anchor="end">-500</text>
<text x="70" y="253.3" text-anchor="end">-1000</text>
<text x="70" y="318.1" text-anchor="end">-1500</text>
<text x="70" y="382.9" text-anchor="end">-2000</text>
<text x="70" y="447.7" text-anchor="end">-2500</text>
<text x="70" y="512.5" text-anchor="end">-3000</text>
<text x="70" y="577.3" text-anchor="end">-3500</text>
<text x="70" y="642.1" text-anchor="end">-4000</text>
<text x="70" y="706.9" text-anchor="end">-4500</text>
<text x="70" y="771.7" text-anchor="end">-5000</text>
<text x="74" y="783" text-anchor="middle">0</text>
<text x="153.2" y="783" text-anchor="middle">500</text>
<text x="232.4" y="783" text-anchor="middle">1000</text>
<text x="311.6" y="783" text-anchor="middle">1500</text>
<text x="390.8" y="783" text-anchor="middle">2000</text>
<text x="470" y="783" text-anchor="middle">2500</text>
<text x="549.2" y="783" text-anchor="middle">3000</text>
<text x="628.4" y="783" text-anchor="middle">3500</text>
<text x="707.6" y="783" text-anchor="middle">4000</text>
<text x="786.8" y="783" text-anchor="middle">4500</text>
<text x="866" y="783" text-anchor="middle">5000</text>
</g>
<text x="470" y="797.5" text-anchor="middle" font-family="Liberation Sans" font-size="13" fill="#262626">Episode Number</text>
<text transform="translate(32,444.5) rotate(-90)" text-anchor="middle" font-family="Liberation Sans" font-size="13" fill="#262626">Episode Reward</text>
<text x="470" y="113.3" text-anchor="middle" font-family="Liberation Sans" font-size="13.2" font-weight="bold" fill="#2a2a2a">Episode reward for SimplePendlumWithImageDiscreteAction with rlPGAgent</text>
</svg>
<!-- toolbar icons -->
<svg class="abs" style="left:760px;top:95px" width="110" height="26" viewBox="760 95 110 26" fill="none" stroke="#4d4d4d" stroke-width="1.1">
 <path d="M768.5,111.5 L782.5,111.5 L782.5,115.5 L768.5,115.5 Z" stroke="#8a8a8a"/>
 <path d="M770.5,111.5 C771,107 774.5,104.5 779,104.5 L779,102 L783,105.5 L779,109 L779,106.8 C776,106.8 773.5,108.5 773,111.5" stroke="#8a8a8a"/>
 <path d="M781,117 L785,113 L785,117 Z" fill="#666" stroke="none"/>
 <path d="M792.5,116.5 L788.8,111.2 C787.8,109.8 788.8,108.6 790.2,109.6 L791.5,110.8 L791.5,104.8 C791.5,103.2 794,103.2 794,104.8 L794,109.5 M794,104.8 L794,102.6 C794,101 796.8,101 796.8,102.6 L796.8,109.5 M796.8,102.8 C796.8,101.3 799.5,101.3 799.5,102.8 L799.5,109.5 M799.5,105 C799.5,103.5 802.2,103.5 802.2,105 L802.2,111 C802.2,113.5 801.2,115 800.3,116.5 L792.5,116.5"/>
 <circle cx="814" cy="107.5" r="6"/><path d="M818.3,111.8 L823.5,117 M811,107.5 L817,107.5 M814,104.5 L814,110.5"/>
 <circle cx="834.5" cy="107.5" r="6"/><path d="M838.8,111.8 L844,117 M831.5,107.5 L837.5,107.5"/>
 <path d="M847.5,109 L856,100.8 L864.5,109 M849.5,107.2 L849.5,116.5 L853.8,116.5 L853.8,111 L858.2,111 L858.2,116.5 L862.5,116.5 L862.5,107.2"/>
 <path d="M859.5,101.5 L862.5,101.5 L862.5,104.5" stroke-width="1.4"/>
</svg>
<!-- right panel -->
<div class="abs" style="left:911px;top:97px;width:160px;height:15px;background:#2789dd"></div>
<div class="abs" style="left:1081px;top:92px;width:110px;height:25px;border:1px solid #cdcdcd;border-radius:4px;background:#f4f4f4"></div>
<div class="t" style="left:1092px;top:97px;color:#a6a6a6">Training stopped</div>
<div class="t" style="left:911px;top:128px">Episode number:</div>
<div class="t" style="left:1041px;top:128px">5000/5000</div>
<div class="t" style="left:911px;top:153px">Start time:</div>
<div class="t" style="left:1041px;top:153px">20-Nov-2024 18:34:54</div>
<div class="t" style="left:911px;top:178px">Duration:</div>
<div class="t" style="left:1041px;top:178px">14:09:23</div>
<div class="t" style="left:911px;top:203px">Final result:</div>
<div class="t" style="left:1041px;top:202px;line-height:14.8px">Training finished with<br>maximum number of<br>episodes.</div>

<div class="panel" style="left:911px;top:258px;width:280px;height:295px">
 <div class="phead"></div>
</div>
<div class="t b" style="left:915px;top:261px">Training Information</div>
<div class="abs" style="left:922px;top:289px;width:258px;height:95px;border:1px solid #7a7a7a;background:#fff"></div>
<div class="abs" style="left:923px;top:290px;width:256px;height:27px;background:#f4f4f4;border-bottom:1px solid #7a7a7a"></div>
<div class="abs" style="left:923px;top:317px;width:256px;height:24px;background:#2789dd"></div>
<div class="abs" style="left:1051px;top:290px;width:1px;height:51px;background:#7a7a7a"></div>
<div class="t b" style="left:926px;top:297px">Agent</div>
<div class="t b" style="left:1055px;top:297px">Status</div>
<div class="t" style="left:926px;top:320px;color:#fff;-webkit-text-stroke:0.25px #fff">rlPGAgent</div>
<div class="t" style="left:1055px;top:320px;color:#fff;-webkit-text-stroke:0.25px #fff">Training finished</div>
<div class="t b" style="left:922px;top:395px">Episode Information (rlPGAgent):</div>
<div class="t" style="left:922px;top:420px">Episode reward:</div>
<div class="t" style="left:1042px;top:420px">-4332.3844</div>
<div class="t" style="left:922px;top:445px">Average reward:</div>
<div class="t" style="left:1042px;top:445px">-4332.3844</div>
<div class="t" style="left:922px;top:470px">Episode Q0:</div>
<div class="t" style="left:1042px;top:470px">-863.2333</div>
<div class="t" style="left:922px;top:495px">Evaluation statistic:</div>
<div class="t" style="left:1042px;top:495px">-4332.3844</div>
<div class="abs" style="left:1070px;top:519px;width:110px;height:23px;border:1px solid #6e6e6e;border-radius:5px;background:#f4f4f4"></div>
<div class="t" style="left:1086px;top:523px">More Details...</div>

<div class="panel" style="left:911px;top:563px;width:280px;height:118px">
 <div class="phead"></div>
</div>
<div class="t b" style="left:915px;top:566px">Plot Options</div>
<div class="cb" style="left:922px;top:595px"></div>
<svg class="abs" style="left:922px;top:595px" width="14" height="14" viewBox="0 0 14 14"><path d="M3,7.2 L5.8,10 L11,3.8" fill="none" stroke="#111" stroke-width="2"/></svg>
<div class="t" style="left:939px;top:595px">Show EpisodeQ0</div>
<div class="cb" style="left:922px;top:622px"></div>
<svg class="abs" style="left:922px;top:622px" width="14" height="14" viewBox="0 0 14 14"><path d="M3,7.2 L5.8,10 L11,3.8" fill="none" stroke="#111" stroke-width="2"/></svg>
<div class="t" style="left:939px;top:622px">Show evaluation statistic</div>
<div class="cb" style="left:922px;top:652px"></div>
<div class="t" style="left:939px;top:651px">Show last N episodes</div>
<div class="abs" style="left:1066px;top:647px;width:114px;height:23px;border:1px solid #d0d0d0;background:#f6f6f6"></div>
<div class="t" style="left:1066px;top:651px;width:109px;text-align:right;color:#a0a0a0">5000</div>

<div class="panel" style="left:911px;top:691px;width:280px;height:102px"></div>
<div class="abs" style="left:917px;top:697px;width:268px;height:90px;background:#fff"></div>
<svg class="abs" style="left:917px;top:697px" width="268" height="90" viewBox="917 697 268 90">
 <path d="M973,704.5 L1013,704.5" stroke="#4dbeee" stroke-width="1"/><circle cx="993" cy="704.5" r="1.7" fill="#4dbeee"/>
 <path d="M973,723.5 L1013,723.5" stroke="#0072bd" stroke-width="1"/><circle cx="993" cy="723.5" r="1.7" fill="#0072bd"/>
 <path d="M973,742.5 L1013,742.5" stroke="#edb120" stroke-width="1"/><circle cx="993" cy="742.5" r="1.7" fill="#edb120"/>
 <path d="M988,770.5 L998,770.5 M993,765.5 L993,775.5 M989.5,767 L996.5,774 M989.5,774 L996.5,767" stroke="#d62fb4" stroke-width="1"/>
 <g font-family="Liberation Sans" font-size="11" fill="#262626">
  <text x="1017" y="708">Episode reward</text>
  <text x="1017" y="727">Average reward</text>
  <text x="1017" y="746">Episode Q0</text>
  <text x="1017" y="769">Evaluation statistic</text>
  <text x="1017" y="781">(MeanEpisodeReward)</text>
 </g>
</svg>

<div id="status" class="abs"></div>
<div class="abs" style="left:1px;top:820px;width:899px;height:1px;background:#fafafa"></div>
<div class="abs" style="left:1px;top:821px;width:899px;height:1px;background:#7a7a7a"></div>
<div class="abs" style="left:901px;top:821px;width:300px;height:1px;background:#c2c2c2"></div>
<div class="abs" style="left:900px;top:820px;width:1px;height:24px;background:#bdbdbd"></div>
<svg class="abs" style="left:1185px;top:826px" width="11" height="14" viewBox="0 0 11 14"><path d="M0.5,1 L7.5,7 L0.5,13 Z" fill="#8c8c8c"/><rect x="8" y="1" width="2" height="12" fill="#8c8c8c"/></svg>
<div id="leftborder" class="abs"></div>
<div id="rightborder" class="abs"></div>
</body></html>
